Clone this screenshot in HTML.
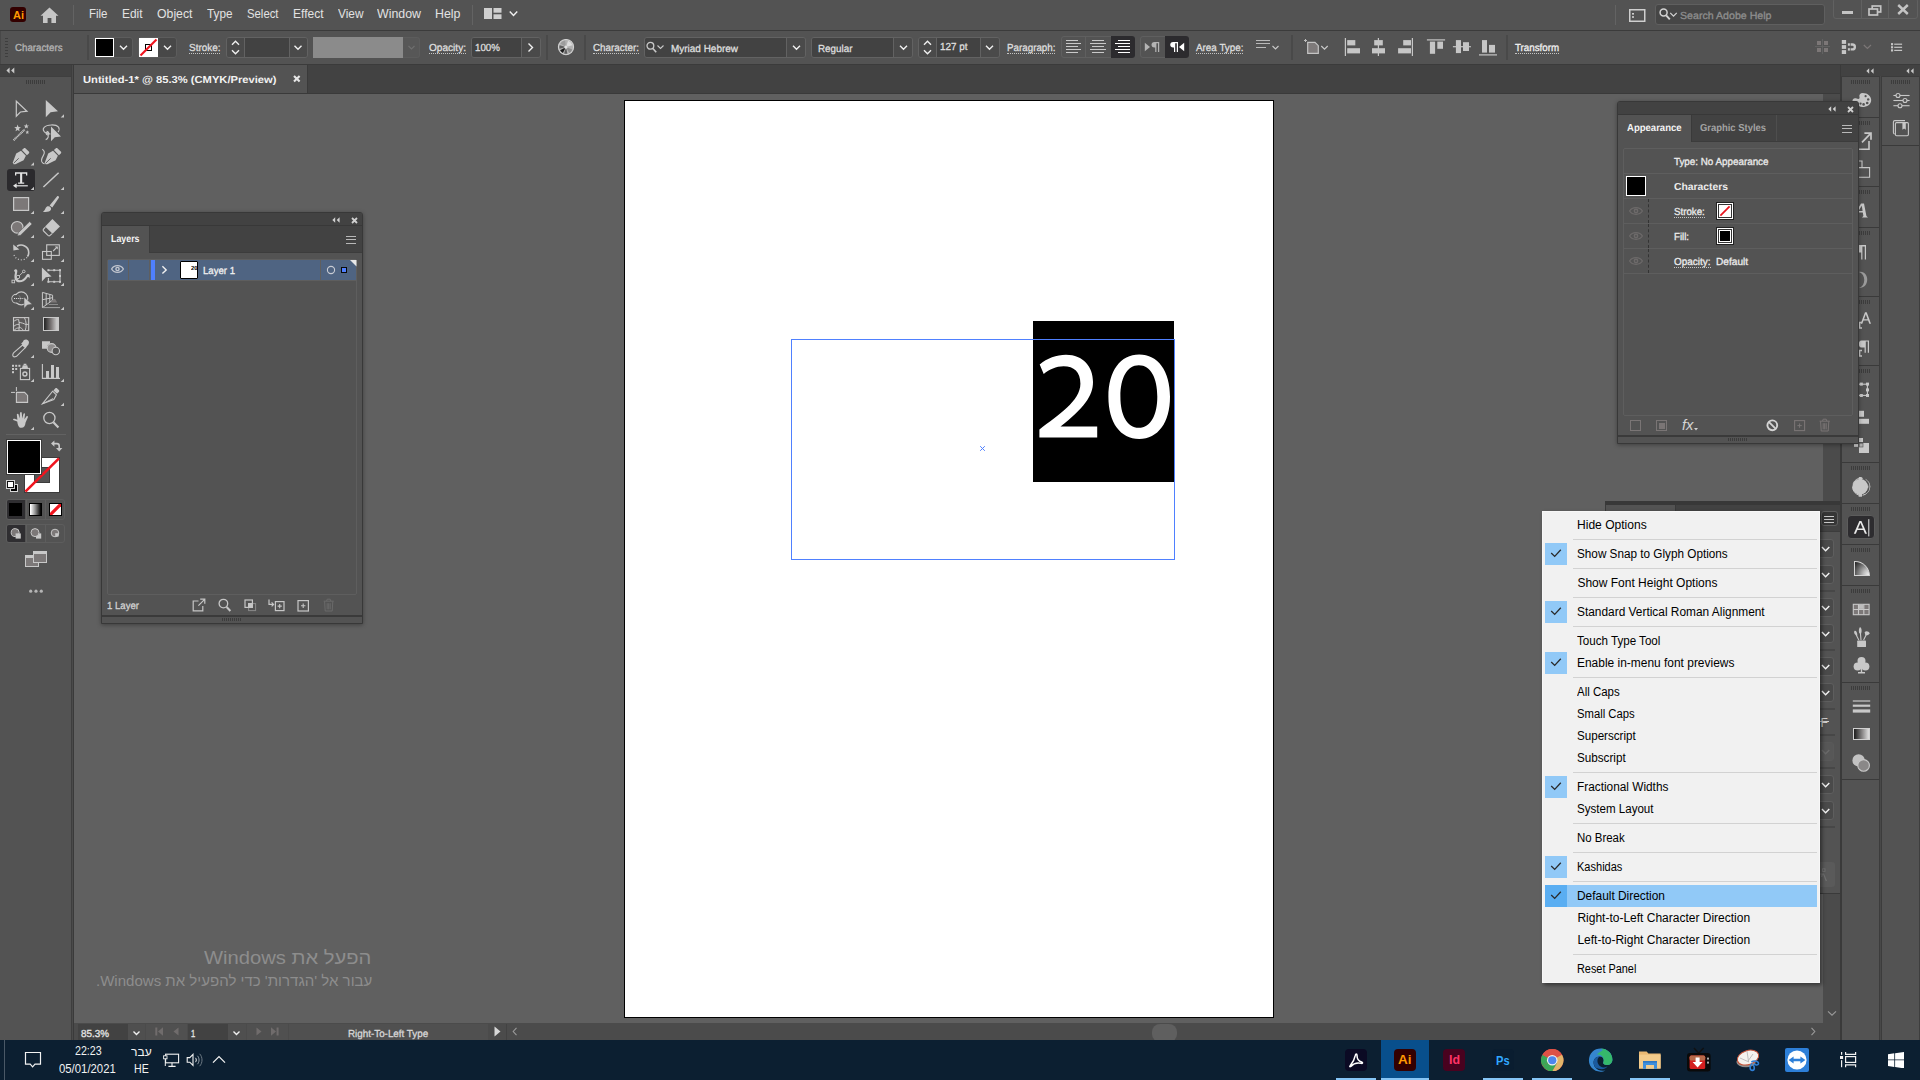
<!DOCTYPE html>
<html><head><meta charset="utf-8"><title>Adobe Illustrator</title>
<style>
html,body{margin:0;padding:0;}
body{width:1920px;height:1080px;overflow:hidden;position:relative;background:#606060;
font-family:"Liberation Sans",sans-serif;font-size:11px;color:#d6d6d6;}
div,svg,span.t{position:absolute;}
div{box-sizing:border-box;}
span.t{white-space:nowrap;transform-origin:0 50%;}
.du{border-bottom:1px dotted #c8c8c8;}
</style></head>
<body>
<div style="left:73px;top:65px;width:1768px;height:29px;background:#424242;"></div><div style="left:74px;top:65px;width:234px;height:29px;background:#535353;border-right:1px solid #3a3a3a;"></div><div style="left:73px;top:93px;width:1768px;height:1px;background:#3a3a3a;"></div><span class="t" style="left:83.3px;top:76px;font-size:10.2px;line-height:10.2px;color:#f2f2f2;text-rendering:geometricPrecision;font-weight:700;transform:scaleX(1.0971);">Untitled-1* @ 85.3% (CMYK/Preview)</span><svg style="left:293px;top:75px;" width="8" height="8" viewBox="0 0 8 8"><path d="M1 1 L6.6 6.6 M6.6 1 L1 6.6" stroke="#e6e6e6" stroke-width="2.1"/></svg><div style="left:73px;top:94px;width:1768px;height:929px;background:#606060;"></div><div style="left:624px;top:100px;width:650px;height:918px;background:#ffffff;border:1px solid #000;"></div><div style="left:1033px;top:321px;width:141px;height:161px;background:#000;"></div><svg style="left:1033px;top:321px" width="141" height="161" viewBox="1033 321 141 161"><path d="M1039.7 364.4 C1047 358.5 1056.5 354.8 1066 354.8 C1083.5 354.8 1093 367 1093 382 C1093 396 1084 408 1060.5 426.6 L1097.2 426.6 L1097.2 437.6 L1039.4 437.6 L1039.4 429.4 C1058 415.5 1080.4 401 1080.4 383.8 C1080.4 372 1074 366.3 1063.6 366.3 C1056 366.3 1049.5 369.5 1043.7 373.9 Z" fill="#fff"/><path d="M1139.2 354.6 C1158 354.6 1170 371 1170 396.8 C1170 422.6 1158 439 1139.2 439 C1120.4 439 1108.4 422.6 1108.4 396.8 C1108.4 371 1120.4 354.6 1139.2 354.6 Z M1138.85 365.3 C1127 365.3 1120.4 378 1120.4 396.5 C1120.4 415 1127 427.8 1138.85 427.8 C1150.7 427.8 1157.3 415 1157.3 396.5 C1157.3 378 1150.7 365.3 1138.85 365.3 Z" fill="#fff" fill-rule="evenodd"/></svg><div style="left:791px;top:339px;width:384px;height:221px;border:1px solid #4f80ff;"></div><svg style="left:979px;top:445px;" width="7" height="7" viewBox="0 0 7 7"><path d="M1.2 1.2 L5.8 5.8 M5.8 1.2 L1.2 5.8" stroke="#4f80ff" stroke-width="1"/></svg><span class="t" style="left:204.3px;top:949px;font-size:18.5px;line-height:18.5px;color:#8d8d8d;direction:rtl;transform:scaleX(1.0918);">הפעל את Windows</span><span class="t" style="left:96px;top:974px;font-size:14.5px;line-height:14.5px;color:#8d8d8d;direction:rtl;transform:scaleX(1.0370);">עבור אל 'הגדרות' כדי להפעיל את Windows.</span><div style="left:73px;top:1023px;width:1768px;height:17px;background:#4b4b4b;"></div><div style="left:78px;top:1024px;width:50px;height:16px;background:#424242;"></div><span class="t" style="left:80.7px;top:1030px;font-size:10.2px;line-height:10.2px;color:#e6e6e6;text-rendering:geometricPrecision;-webkit-text-stroke:.3px;transform:scaleX(0.9692);">85.3%</span><div style="left:128px;top:1024px;width:17px;height:16px;background:#4f4f4f;"></div><svg style="left:0;top:0;overflow:visible" width="1" height="1"><path d="M133.5 1031.5 L136.5 1034.5 L139.5 1031.5" fill="none" stroke="#f0f0f0" stroke-width="1.4"/></svg><div style="left:146px;top:1024px;width:41px;height:16px;background:#505050;"></div><svg style="left:155px;top:1027px;" width="9" height="9" viewBox="0 0 9 9"><rect x="0.3" y="0.5" width="2" height="8" fill="#706c6c"/><path d="M8 0.3 L3 4.5 L8 8.7 Z" fill="#706c6c"/></svg><svg style="left:172px;top:1027px;" width="8" height="9" viewBox="0 0 8 9"><path d="M6.5 0.5 L1.5 4.5 L6.5 8.5 Z" fill="#706c6c"/></svg><div style="left:188px;top:1024px;width:40px;height:16px;background:#424242;"></div><span class="t" style="left:190.8px;top:1030px;font-size:10.2px;line-height:10.2px;color:#e6e6e6;text-rendering:geometricPrecision;-webkit-text-stroke:.3px;transform:scaleX(0.7405);">1</span><div style="left:228px;top:1024px;width:18px;height:16px;background:#4f4f4f;"></div><svg style="left:0;top:0;overflow:visible" width="1" height="1"><path d="M233.5 1031.5 L236.5 1034.5 L239.5 1031.5" fill="none" stroke="#f0f0f0" stroke-width="1.4"/></svg><div style="left:247px;top:1024px;width:41px;height:16px;background:#505050;"></div><svg style="left:255px;top:1027px;" width="8" height="9" viewBox="0 0 8 9"><path d="M1.5 0.5 L6.5 4.5 L1.5 8.5 Z" fill="#706c6c"/></svg><svg style="left:270px;top:1027px;" width="9" height="9" viewBox="0 0 9 9"><path d="M1 0.3 L6 4.5 L1 8.7 Z" fill="#706c6c"/><rect x="6.6" y="0.5" width="2" height="8" fill="#706c6c"/></svg><div style="left:289px;top:1024px;width:199px;height:16px;background:#505050;"></div><span class="t" style="left:347.8px;top:1030px;font-size:10.2px;line-height:10.2px;color:#d8d8d8;text-rendering:geometricPrecision;-webkit-text-stroke:.3px;transform:scaleX(0.9655);">Right-To-Left Type</span><svg style="left:494px;top:1026px;" width="8" height="11" viewBox="0 0 8 11"><path d="M0.5 0.5 L6.5 5.5 L0.5 10.5 Z" fill="#d8d8d8"/></svg><div style="left:506px;top:1024px;width:1px;height:16px;background:#424242;"></div><svg style="left:512px;top:1027px;" width="6" height="9" viewBox="0 0 6 9"><path d="M4.5 0.8 L1.2 4.5 L4.5 8.2" fill="none" stroke="#9a9a9a" stroke-width="1.1"/></svg><div style="left:1152px;top:1024px;width:25px;height:18px;background:#5f5f5f;border-radius:8px;"></div><svg style="left:1810px;top:1027px;" width="6" height="9" viewBox="0 0 6 9"><path d="M1.5 0.8 L4.8 4.5 L1.5 8.2" fill="none" stroke="#9a9a9a" stroke-width="1.1"/></svg><div style="left:1823px;top:94px;width:17px;height:946px;background:#4b4b4b;"></div><svg style="left:1827px;top:1010px;" width="10" height="7" viewBox="0 0 10 7"><path d="M1 1.3 L5 5.2 L9 1.3" fill="none" stroke="#9a9a9a" stroke-width="1.1"/></svg><div style="left:0px;top:65px;width:73px;height:975px;background:#535353;"></div><div style="left:71px;top:65px;width:1px;height:975px;background:#3e3e3e;"></div><div style="left:72px;top:65px;width:1px;height:975px;background:#4a4a4a;"></div><div style="left:73px;top:65px;width:1px;height:975px;background:#3a3a3a;"></div><div style="left:0px;top:65px;width:71px;height:11px;background:#424242;"></div><div style="left:0px;top:76px;width:71px;height:1px;background:#3f3f3f;"></div><svg style="left:6px;top:67px;" width="9" height="7" viewBox="0 0 9 7"><path d="M3.6 0.4 L0.4 3.5 L3.6 6.6 Z M8.3 0.4 L5.1 3.5 L8.3 6.6 Z" fill="#c8c8c8"/></svg><div style="left:26px;top:80px;width:1px;height:4px;background:#3c3c3c;"></div><div style="left:28px;top:80px;width:1px;height:4px;background:#3c3c3c;"></div><div style="left:30px;top:80px;width:1px;height:4px;background:#3c3c3c;"></div><div style="left:32px;top:80px;width:1px;height:4px;background:#3c3c3c;"></div><div style="left:34px;top:80px;width:1px;height:4px;background:#3c3c3c;"></div><div style="left:36px;top:80px;width:1px;height:4px;background:#3c3c3c;"></div><div style="left:38px;top:80px;width:1px;height:4px;background:#3c3c3c;"></div><div style="left:40px;top:80px;width:1px;height:4px;background:#3c3c3c;"></div><div style="left:42px;top:80px;width:1px;height:4px;background:#3c3c3c;"></div><div style="left:44px;top:80px;width:1px;height:4px;background:#3c3c3c;"></div><div style="left:7px;top:169px;width:28px;height:22px;background:#2b2a2d;border-radius:3px;"></div><div style="left:43px;top:317px;width:16px;height:14px;border:1.1px solid #c8c8c8;background:linear-gradient(90deg,#2a2a2a 5%,#7a7676 50%,#c8c8c8 90%);"></div><svg style="left:0;top:0" width="74" height="600" viewBox="0 0 74 600"><path d="M16.3 101.2 L16.3 116.2 L20.4 112 L27 111.2 Z" fill="none" stroke="#c8c8c8" stroke-width="1.2" stroke-linejoin="miter"/><path d="M45.8 100 L45.8 117.2 L50.6 112.2 L58 111.3 Z" fill="#c8c8c8"/><path d="M64 114.3 L64 117.6 L60.7 117.6 Z" fill="#c8c8c8"/><path d="M13.6 140.2 L24.6 129.6" stroke="#c8c8c8" stroke-width="2" stroke-dasharray="1.1 0.5"/><path d="M17.6 124.6 L18.5 127 L21 127.3 L19 128.8 L19.6 131.3 L17.6 129.9 L15.5 131.3 L16.2 128.8 L14.2 127.3 L16.7 127 Z" fill="#c8c8c8"/><path d="M26.3 123.6 L27 125.4 L28.9 125.6 L27.4 126.8 L27.9 128.6 L26.3 127.6 L24.7 128.6 L25.2 126.8 L23.7 125.6 L25.6 125.4 Z" fill="#c8c8c8"/><path d="M27.3 130.2 L27.8 131.5 L29.2 131.7 L28.1 132.6 L28.5 134 L27.3 133.2 L26.1 134 L26.5 132.6 L25.4 131.7 L26.8 131.5 Z" fill="#c8c8c8"/><path d="M50.5 134 C44 134 42 129.5 44.2 127.3 C47 124.3 56 124 58.5 127.2 C59.6 128.7 59 131 58 132" fill="none" stroke="#c8c8c8" stroke-width="1.1"/><path d="M47.5 131.6 C45.5 132.6 46 135.2 48 134.8 C49.6 134.4 48.8 132 47.5 131.6 C49.5 136 48 139 45.7 139.6" fill="none" stroke="#c8c8c8" stroke-width="1.1"/><path d="M51 126.6 L51 141.2 L54.8 137.2 L61 136.4 Z" fill="#c8c8c8"/><g transform="translate(0 0)"><path d="M12.8 162.4 L16.2 153.4 L21 150.8 L25.9 155.7 L23.6 160.2 L15.4 164.3 L13.6 164.3 Z" fill="#c8c8c8"/><path d="M21.9 150 L23.6 148.4 C24.2 147.8 25 147.8 25.6 148.4 L28.8 151.6 C29.4 152.2 29.4 153 28.8 153.6 L26.9 155.2 Z" fill="#c8c8c8"/><path d="M13.9 163 L18.7 158.3" stroke="#535353" stroke-width="0.9"/></g><path d="M34 162.29999999999998 L34 165.6 L30.7 165.6 Z" fill="#c8c8c8"/><g transform="translate(32 0)"><path d="M12.8 162.4 L16.2 153.4 L21 150.8 L25.9 155.7 L23.6 160.2 L15.4 164.3 L13.6 164.3 Z" fill="#c8c8c8"/><path d="M21.9 150 L23.6 148.4 C24.2 147.8 25 147.8 25.6 148.4 L28.8 151.6 C29.4 152.2 29.4 153 28.8 153.6 L26.9 155.2 Z" fill="#c8c8c8"/><path d="M13.9 163 L18.7 158.3" stroke="#535353" stroke-width="0.9"/></g><path d="M42.3 149.2 C45 151 44.8 153 43.4 155.4 C41.6 158.4 41 161.6 42.6 162.8 C43.2 163.3 44 163.6 44.7 163.7" fill="none" stroke="#c8c8c8" stroke-width="1.1"/><path d="M15 172.3 L27.3 172.3 L27.3 175.6 L26 175.6 L26 173.8 L22.2 173.8 L22.2 182.4 L24.2 182.4 L24.2 183.8 L18.1 183.8 L18.1 182.4 L20.1 182.4 L20.1 173.8 L16.3 173.8 L16.3 175.6 L15 175.6 Z" fill="#e4e4e4"/><path d="M16 185.8 L27.8 185.8" stroke="#e4e4e4" stroke-width="1.2"/><path d="M16.6 183.3 L13 185.8 L16.6 188.3 Z" fill="#e4e4e4"/><path d="M34 186.7 L34 190 L30.7 190 Z" fill="#c8c8c8"/><path d="M43.4 187 L58.6 172.8" stroke="#c8c8c8" stroke-width="1.5"/><path d="M64 186.7 L64 190 L60.7 190 Z" fill="#c8c8c8"/><rect x="13.6" y="197.6" width="15" height="12.8" fill="#7c7878" stroke="#c8c8c8" stroke-width="1.2"/><path d="M34 210.7 L34 214 L30.7 214 Z" fill="#c8c8c8"/><path d="M49.6 205.5 L57 196.4 C57.8 195.4 59.6 196.6 58.9 197.8 L52.3 207.6 Z" fill="#c8c8c8"/><path d="M42.9 211.8 C45 211 45 208 47 206.5 C49 205.3 51.8 207.4 51 209.6 C50 212 46 212.4 42.9 211.8 Z" fill="#c8c8c8"/><path d="M64 210.7 L64 214 L60.7 214 Z" fill="#c8c8c8"/><circle cx="17.2" cy="227.3" r="5.8" fill="#7c7878" stroke="#c8c8c8" stroke-width="1.2"/><path d="M29.7 221.6 L32.1 224 L20.6 235.2 L17.4 236 L18.2 232.8 Z" fill="#c8c8c8" stroke="#535353" stroke-width="0.6"/><path d="M34 234.7 L34 238 L30.7 238 Z" fill="#c8c8c8"/><path d="M52.4 219.1 L60 226.5 L52.6 233.7 L45.1 226.5 Z" fill="#c8c8c8"/><path d="M45.4 227.2 L43.6 229 C43 229.6 43 230.4 43.6 231 L48 235.4 C48.7 236 49.5 236 50.1 235.4 L52 233.6" fill="none" stroke="#c8c8c8" stroke-width="1.1"/><path d="M64 234.7 L64 238 L60.7 238 Z" fill="#c8c8c8"/><path d="M17 246.2 C22 243.2 28.5 246.5 28.7 252.2 C28.8 254 28.2 255.6 27.4 256.6" fill="none" stroke="#c8c8c8" stroke-width="1.6"/><path d="M13.2 244.6 L13.4 250.6 L19.4 249.6 Z" fill="#c8c8c8"/><path d="M14 255 C15.5 259 20 260.6 24 259.4 C25.6 258.8 26.8 257.8 27.6 256.6" fill="none" stroke="#c8c8c8" stroke-width="1.2" stroke-dasharray="1 1.9"/><path d="M34 258.7 L34 262 L30.7 262 Z" fill="#c8c8c8"/><rect x="46.7" y="244.8" width="12.6" height="10.6" fill="none" stroke="#c8c8c8" stroke-width="1.1"/><rect x="42.5" y="251.5" width="8.8" height="7.8" fill="none" stroke="#c8c8c8" stroke-width="1.1"/><path d="M53.2 251 L57 247.2" stroke="#c8c8c8" stroke-width="1.1"/><path d="M54.8 246.6 L57.8 246.6 L57.8 249.6 Z" fill="#c8c8c8"/><path d="M64 258.7 L64 262 L60.7 262 Z" fill="#c8c8c8"/><path d="M14 270.6 C15.5 268.2 18 269.6 17.2 272.2 C16.6 274.6 16.2 277.6 18.2 279.8 C21 281.4 24.6 278.4 26.2 275.4 C27.6 273 30 273.6 29.8 276.2 L29.4 278.4 C28.4 276.4 27.6 276.8 26.6 278.6 C24.6 281.8 19.6 283.4 16.4 281.4 C13.4 279 14.6 275 15 272.6 Z" fill="#c8c8c8"/><path d="M13.2 281.6 L23.6 271.6" stroke="#c8c8c8" stroke-width="0.9"/><circle cx="18" cy="277" r="1.7" fill="#535353" stroke="#c8c8c8" stroke-width="0.9"/><rect x="12" y="280.2" width="2.6" height="2.6" fill="#535353" stroke="#c8c8c8" stroke-width="0.9"/><circle cx="23.8" cy="271.4" r="1.3" fill="#535353" stroke="#c8c8c8" stroke-width="0.9"/><path d="M34 282.7 L34 286 L30.7 286 Z" fill="#c8c8c8"/><path d="M41.9 267.6 L41.9 281.4 L45.8 277.3 L51.6 276.6 Z" fill="#c8c8c8"/><path d="M48.4 270.2 L60 270.2 L60 281.8 L48.4 281.8 L48.4 278" fill="none" stroke="#c8c8c8" stroke-width="1.1"/><rect x="47.4" y="269.2" width="2" height="2" fill="#c8c8c8"/><rect x="53.2" y="269.2" width="2" height="2" fill="#c8c8c8"/><rect x="59" y="269.2" width="2" height="2" fill="#c8c8c8"/><rect x="59" y="275" width="2" height="2" fill="#c8c8c8"/><rect x="59" y="280.8" width="2" height="2" fill="#c8c8c8"/><rect x="53.2" y="280.8" width="2" height="2" fill="#c8c8c8"/><rect x="47.4" y="280.8" width="2" height="2" fill="#c8c8c8"/><path d="M64 282.7 L64 286 L60.7 286 Z" fill="#c8c8c8"/><circle cx="16.2" cy="298.7" r="4.3" fill="#535353" stroke="#c8c8c8" stroke-width="1.1"/><circle cx="21.3" cy="298.4" r="6.5" fill="#535353" stroke="#c8c8c8" stroke-width="1.1"/><circle cx="16.2" cy="298.7" r="3.7" fill="#535353"/><path d="M18.9 295.4 A4.3 4.3 0 0 1 18.9 302" fill="none" stroke="#8a8a8a" stroke-width="0.8"/><path d="M14 298.5 L23.4 298.5" stroke="#e0e0e0" stroke-width="1.2" stroke-dasharray="1.1 1.0"/><path d="M24 297 L24 308.4 L27.4 304.9 L32.2 304.3 Z" fill="#c8c8c8" stroke="#535353" stroke-width="0.5"/><path d="M34 306.7 L34 310 L30.7 310 Z" fill="#c8c8c8"/><path d="M42.4 292.4 L42.4 307.6 L52.6 300.2 L52.6 295.2 Z M42.4 299.7 L52.6 297.7 M46.2 293.5 L46.2 304.8 M49.8 294.5 L49.8 302.2" fill="none" stroke="#c8c8c8" stroke-width="1"/><path d="M53.4 299 L55.2 299 L57.2 302.4 L50.6 302.4 Z" fill="#7c7878"/><path d="M48.8 304.5 L58 304.5" stroke="#8c8c8c" stroke-width="1"/><path d="M43 307.6 L60 307.6" stroke="#a4a4a4" stroke-width="1"/><path d="M64 306.7 L64 310 L60.7 310 Z" fill="#c8c8c8"/><rect x="13.5" y="317.6" width="15.2" height="13" fill="#5c5a5a" stroke="#c8c8c8" stroke-width="1.1"/><path d="M24.4 317.6 C26.6 321.5 26.6 326.5 25.2 330.6 M26 324.4 L28.7 324.4 M18.6 319.5 C19.4 323 19.4 327 18.9 330.6 M13.5 321.8 C15 320 17.2 319.4 18.6 319.6 M13.6 326.6 C15.4 324.6 17.6 324.2 19 324.4 M19 322.4 C21.4 322.6 24 323.6 26 324.6 M14 330.4 C15.6 328.4 17.4 327.8 19 328 M19 327 C20.8 327.6 22.6 329 23.6 330.6" fill="none" stroke="#c8c8c8" stroke-width="1"/><path d="M22.6 345 L25.3 347.6 L17 355.8 C16 356.8 14 357.2 13.2 356.4 C12.4 355.6 12.8 353.6 13.8 352.6 Z" fill="none" stroke="#c8c8c8" stroke-width="1.1"/><path d="M21.2 343.4 L23 341.8 C23.4 340.2 25.2 339.2 27 339.8 C28.8 340.4 29.6 342.4 28.6 344 C28.2 345.4 27 346 26.8 346.4 L25.6 348.6 Z" fill="#c8c8c8"/><path d="M34 354.7 L34 358 L30.7 358 Z" fill="#c8c8c8"/><path d="M42 341.2 L50 341.2 L50 343.4 C47.6 344 46.6 346.4 47 348.8 L42 348.8 Z" fill="#c8c8c8"/><circle cx="51.6" cy="348" r="4.4" fill="#8e8c8c" stroke="#c8c8c8" stroke-width="1.1"/><circle cx="55.8" cy="351" r="3.7" fill="#535353" stroke="#c8c8c8" stroke-width="1.1"/><rect x="12" y="364.8" width="2" height="2" fill="#c8c8c8"/><rect x="15.2" y="364.8" width="2" height="2" fill="#c8c8c8"/><rect x="18.4" y="364.8" width="2" height="2" fill="#c8c8c8"/><rect x="12" y="368" width="2" height="2" fill="#c8c8c8"/><rect x="15.2" y="368" width="2" height="2" fill="#c8c8c8"/><rect x="12" y="371.2" width="2" height="2" fill="#c8c8c8"/><rect x="20.4" y="368.4" width="9.2" height="11.2" fill="none" stroke="#c8c8c8" stroke-width="1.1"/><path d="M22 368 L22.8 365.2 L27.2 365.2 L28 368 Z M23.6 365 L23.6 363.8 L26.4 363.8 L26.4 365 Z" fill="#c8c8c8"/><circle cx="24.9" cy="374" r="2" fill="none" stroke="#c8c8c8" stroke-width="1.4"/><path d="M34 378.7 L34 382 L30.7 382 Z" fill="#c8c8c8"/><path d="M42.4 364 L42.4 378.4 L60 378.4" fill="none" stroke="#c8c8c8" stroke-width="1.1"/><rect x="46" y="371" width="3" height="7" fill="#c8c8c8"/><rect x="51" y="365" width="3" height="13" fill="#c8c8c8"/><rect x="56" y="367" width="3" height="11" fill="#c8c8c8"/><path d="M64 378.7 L64 382 L60.7 382 Z" fill="#c8c8c8"/><path d="M11 392.4 L15 392.4 M16.4 387 L16.4 391" stroke="#c8c8c8" stroke-width="1"/><path d="M16.4 392.4 L24.6 392.4 L27.6 395.4 L27.6 402.4 L16.4 402.4 Z" fill="#7c7878" stroke="#c8c8c8" stroke-width="1.1"/><path d="M53.4 390.4 L55.2 388.4 C55.8 387.8 56.6 387.8 57.2 388.4 L58.8 390 C59.4 390.6 59.4 391.4 58.8 392 L57 393.8 Z" fill="#c8c8c8"/><path d="M52.6 391.2 L56.4 394.8 L53.8 399.6 L42.4 403.8 Z" fill="none" stroke="#c8c8c8" stroke-width="1.1"/><path d="M42.4 403.8 L53 398.6" stroke="#c8c8c8" stroke-width="1"/><path d="M64 402.7 L64 406 L60.7 406 Z" fill="#c8c8c8"/><path d="M17.2 421.4 L13.2 420 C12.8 419.2 13.6 418.6 14.6 418.8 L17.4 419.8 L16.8 414.6 C16.8 413.4 18.4 413.4 18.6 414.6 L19.6 418.6 L20 413 C20.2 411.8 21.8 411.8 21.8 413 L22.2 418.6 L23.4 414 C23.8 412.8 25.2 413.2 25 414.4 L24.4 419.2 L26.4 416.4 C27 415.4 28.4 416.2 27.8 417.4 L25.6 422.4 C25.2 425.6 24 427.8 21.4 427.8 C18.6 427.8 17.8 425 17.2 421.4 Z" fill="#c8c8c8"/><path d="M34 426.7 L34 430 L30.7 430 Z" fill="#c8c8c8"/><circle cx="49.4" cy="418" r="5.6" fill="none" stroke="#c8c8c8" stroke-width="1.3"/><path d="M53.4 422.2 L58.4 427.4" stroke="#c8c8c8" stroke-width="2.2"/><path d="M6 434.5 L66 434.5" stroke="#626262" stroke-width="1"/><path d="M54 443.6 L57 443.6 C58.6 443.6 59.2 444.4 59.2 446 L59.2 448.6" fill="none" stroke="#c8c8c8" stroke-width="1.6"/><path d="M54.4 440.4 L51 443.6 L54.4 446.8 Z M56 448 L62.4 448 L59.2 451.4 Z" fill="#c8c8c8"/><circle cx="30.7" cy="591.2" r="1.6" fill="#b4b4b4"/><circle cx="36" cy="591.2" r="1.6" fill="#b4b4b4"/><circle cx="41.3" cy="591.2" r="1.6" fill="#b4b4b4"/></svg><svg style="left:24px;top:457px" width="37" height="37" viewBox="24 457 37 37"><rect x="24.5" y="457.5" width="35" height="35" fill="#fff" stroke="#3c3c3c" stroke-width="1"/><rect x="34.5" y="467.5" width="15" height="15" fill="#535353" stroke="#3c3c3c" stroke-width="1"/><path d="M25.4 491.6 L59 458.4" stroke="#f0141e" stroke-width="2.6"/></svg><div style="left:6px;top:439px;width:36px;height:36px;background:#000;border:1px solid #3c3c3c;box-shadow:inset 0 0 0 1px #fff;"></div><div style="left:10px;top:484px;width:8px;height:8px;background:#000;border:1px solid #d8d8d8;"></div><div style="left:6px;top:480px;width:9px;height:9px;background:#111;border:1px solid #d4d4d4;"></div><div style="left:8px;top:482px;width:5px;height:5px;background:#fff;"></div><div style="left:6px;top:499px;width:59px;height:21px;border:1px solid #5d5d5d;border-radius:3px;"></div><div style="left:7px;top:500px;width:18px;height:19px;background:#2f2e31;border-radius:2px 0 0 2px;"></div><div style="left:25.5px;top:500px;width:1px;height:19px;background:#5d5d5d;"></div><div style="left:45px;top:500px;width:1px;height:19px;background:#5d5d5d;"></div><div style="left:9px;top:503px;width:13px;height:13px;background:#000;"></div><div style="left:29px;top:503px;width:13px;height:13px;border:1px solid #000;background:linear-gradient(90deg,#fff 5%,#8a8a8a 50%,#0a0a0a 95%);"></div><div style="left:49px;top:503px;width:13px;height:13px;background:#fff;border:1px solid #000;"></div><svg style="left:50px;top:504px;" width="11" height="11" viewBox="0 0 11 11"><path d="M0 11 L11 0" stroke="#f0141e" stroke-width="3.2"/></svg><div style="left:6px;top:524px;width:59px;height:19px;border:1px solid #5d5d5d;border-radius:3px;"></div><div style="left:7px;top:525px;width:18px;height:17px;background:#2f2e31;border-radius:2px 0 0 2px;"></div><div style="left:25.5px;top:525px;width:1px;height:17px;background:#5d5d5d;"></div><div style="left:45px;top:525px;width:1px;height:17px;background:#5d5d5d;"></div><svg style="left:0;top:520px" width="74" height="26" viewBox="0 520 74 26"><circle cx="15.2" cy="532.6" r="4" fill="#7c7878" stroke="#c8c8c8" stroke-width="1"/><rect x="15.6" y="533.4" width="5.2" height="5.2" fill="#c8c8c8"/><rect x="36" y="533.4" width="5.2" height="5.2" fill="#c8c8c8"/><circle cx="35" cy="532.6" r="4" fill="#7c7878" stroke="#c8c8c8" stroke-width="1"/><circle cx="55" cy="533" r="3.8" fill="#7c7878" stroke="#c8c8c8" stroke-width="1"/><rect x="55.2" y="533.2" width="3.4" height="3.4" fill="#c8c8c8"/></svg><div style="left:25px;top:555px;width:14px;height:12px;background:#7c7878;border:1px solid #c8c8c8;border-top:3px solid #c8c8c8;"></div><div style="left:33px;top:551px;width:14px;height:12px;background:#7c7878;border:1px solid #c8c8c8;border-top:3px solid #c8c8c8;"></div><div style="left:101px;top:212px;width:262px;height:412px;background:#535353;border:1px solid #383838;border-radius:3px 3px 0 0;box-shadow:0 1px 4px rgba(0,0,0,.35);"></div><div style="left:102px;top:213px;width:260px;height:13px;background:#424242;border-radius:2px 2px 0 0;"></div><div style="left:102px;top:225px;width:260px;height:1px;background:#383838;"></div><div style="left:102px;top:226px;width:260px;height:27px;background:#424242;"></div><div style="left:102px;top:252px;width:260px;height:1px;background:#3c3c3c;"></div><div style="left:102px;top:226px;width:47px;height:27px;background:#535353;"></div><div style="left:149px;top:226px;width:1px;height:27px;background:#3c3c3c;"></div><span class="t" style="left:111px;top:235px;font-size:10.2px;line-height:10.2px;color:#f4f4f4;text-rendering:geometricPrecision;font-weight:700;transform:scaleX(0.8673);">Layers</span><svg style="left:332px;top:217px;" width="8" height="6" viewBox="0 0 8 6"><path d="M3.2 0.2 L0.3 3 L3.2 5.8 Z M7.6 0.2 L4.7 3 L7.6 5.8 Z" fill="#d0d0d0"/></svg><svg style="left:351px;top:217px;" width="7" height="7" viewBox="0 0 7 7"><path d="M1 1 L6 6 M6 1 L1 6" stroke="#d0d0d0" stroke-width="1.8"/></svg><div style="left:346px;top:236.0px;width:10px;height:1px;background:#b8b8b8;"></div><div style="left:346px;top:239.4px;width:10px;height:1px;background:#b8b8b8;"></div><div style="left:346px;top:242.8px;width:10px;height:1px;background:#b8b8b8;"></div><div style="left:107px;top:259px;width:250px;height:336px;border:1px solid #5e5e5e;border-radius:2px;"></div><div style="left:108px;top:260px;width:248px;height:20px;background:#4f6482;"></div><div style="left:108px;top:280px;width:248px;height:1px;background:#5e5e5e;"></div><div style="left:128px;top:260px;width:1px;height:20px;background:#5f5f5f;"></div><div style="left:149px;top:260px;width:1px;height:20px;background:#5f5f5f;"></div><div style="left:320px;top:260px;width:1px;height:20px;background:#5f5f5f;"></div><div style="left:151px;top:260px;width:3.5px;height:19.5px;background:#4f80ff;"></div><svg style="left:111px;top:264px;" width="13" height="10" viewBox="0 0 13 10"><path d="M0.6 5 C3 0.6 10 0.6 12.4 5 C10 9.4 3 9.4 0.6 5 Z" fill="none" stroke="#c2c6cf" stroke-width="1.3"/><circle cx="6.5" cy="5" r="2.3" fill="#c2c6cf"/><circle cx="6.5" cy="5" r="0.9" fill="#4f6482"/></svg><svg style="left:161px;top:265px;" width="7" height="10" viewBox="0 0 7 10"><path d="M1.4 1.2 L5.2 4.9 L1.4 8.6" fill="none" stroke="#f0f0f0" stroke-width="1.4"/></svg><div style="left:180px;top:261px;width:18px;height:18px;background:#fff;border:1px solid #000;border-radius:1px;"></div><span class="t" style="left:190.6px;top:266px;font-size:5px;line-height:5px;color:#000;font-weight:700;transform:scaleX(1.1685);">20</span><span class="t" style="left:203px;top:267px;font-size:10.2px;line-height:10.2px;color:#f0f0f0;text-rendering:geometricPrecision;-webkit-text-stroke:.3px;transform:scaleX(0.9416);">Layer 1</span><svg style="left:326px;top:265px;" width="10" height="10" viewBox="0 0 10 10"><circle cx="5" cy="5" r="3.6" fill="none" stroke="#c9ccd4" stroke-width="1.1"/></svg><div style="left:341px;top:267px;width:6px;height:6px;background:#4f80ff;border:1px solid #0a0a0a;"></div><svg style="left:350px;top:260px;" width="7" height="7" viewBox="0 0 7 7"><path d="M0 0 L6.5 0 L6.5 6.5 Z" fill="#e8e8e8"/></svg><span class="t" style="left:107.4px;top:602px;font-size:10.2px;line-height:10.2px;color:#d2d2d2;text-rendering:geometricPrecision;-webkit-text-stroke:.3px;transform:scaleX(0.9416);">1 Layer</span><svg style="left:192px;top:598px;" width="14" height="14" viewBox="0 0 14 14"><path d="M6.5 3 L1.2 3 L1.2 12.8 L10.8 12.8 L10.8 8" fill="none" stroke="#c6c6c6" stroke-width="1.2"/><path d="M6.4 7.6 L12.4 1.6 M8.2 1.2 L12.8 1.2 L12.8 5.8" fill="none" stroke="#c6c6c6" stroke-width="1.2"/></svg><svg style="left:218px;top:598px;" width="14" height="14" viewBox="0 0 14 14"><circle cx="5.4" cy="5.6" r="4.3" fill="none" stroke="#c6c6c6" stroke-width="1.3"/><path d="M8.6 9 L12.4 13" stroke="#c6c6c6" stroke-width="2"/></svg><svg style="left:244px;top:599px;" width="13" height="13" viewBox="0 0 13 13"><rect x="4.6" y="4.6" width="7" height="7" fill="none" stroke="#8a8a8a" stroke-width="1"/><rect x="1" y="1" width="7.4" height="7.4" fill="none" stroke="#c6c6c6" stroke-width="1.2"/><rect x="4" y="4" width="4.6" height="4.6" fill="#c6c6c6"/></svg><svg style="left:268px;top:599px;" width="17" height="13" viewBox="0 0 17 13"><path d="M1 0.6 L1 5.4 L5.4 5.4 M3.6 3.4 L5.6 5.4 L3.6 7.4" fill="none" stroke="#c6c6c6" stroke-width="1.2"/><rect x="7.4" y="2.6" width="8.6" height="9" fill="none" stroke="#c6c6c6" stroke-width="1.2"/><path d="M9.6 7.1 L13.8 7.1 M11.7 5 L11.7 9.2" stroke="#c6c6c6" stroke-width="1.1"/></svg><svg style="left:297px;top:599px;" width="13" height="13" viewBox="0 0 13 13"><rect x="1" y="1.6" width="10.4" height="10.4" fill="none" stroke="#c6c6c6" stroke-width="1.2"/><path d="M4 6.8 L8.4 6.8 M6.2 4.6 L6.2 9" stroke="#c6c6c6" stroke-width="1.1"/></svg><svg style="left:323px;top:598px;" width="12" height="14" viewBox="0 0 12 14"><path d="M0.6 3.2 L10.8 3.2 M3.6 3 L4.2 1.2 L7.2 1.2 L7.8 3 M1.6 3.4 L2.2 13 L9.2 13 L9.8 3.4 M4.2 5.2 L4.2 11.4 M5.7 5.2 L5.7 11.4 M7.2 5.2 L7.2 11.4" fill="none" stroke="#6a6a6a" stroke-width="1"/></svg><div style="left:102px;top:615px;width:260px;height:2px;background:#3a3a3a;"></div><div style="left:222px;top:618px;width:1px;height:3px;background:#3c3c3c;"></div><div style="left:224px;top:618px;width:1px;height:3px;background:#3c3c3c;"></div><div style="left:226px;top:618px;width:1px;height:3px;background:#3c3c3c;"></div><div style="left:228px;top:618px;width:1px;height:3px;background:#3c3c3c;"></div><div style="left:230px;top:618px;width:1px;height:3px;background:#3c3c3c;"></div><div style="left:232px;top:618px;width:1px;height:3px;background:#3c3c3c;"></div><div style="left:234px;top:618px;width:1px;height:3px;background:#3c3c3c;"></div><div style="left:236px;top:618px;width:1px;height:3px;background:#3c3c3c;"></div><div style="left:238px;top:618px;width:1px;height:3px;background:#3c3c3c;"></div><div style="left:240px;top:618px;width:1px;height:3px;background:#3c3c3c;"></div><div style="left:1840px;top:65px;width:80px;height:975px;background:#535353;"></div><div style="left:1840px;top:65px;width:2px;height:975px;background:#3a3a3a;"></div><div style="left:1841px;top:65px;width:79px;height:11px;background:#424242;"></div><div style="left:1841px;top:76px;width:79px;height:1px;background:#3c3c3c;"></div><div style="left:1879px;top:76px;width:1px;height:964px;background:#3c3c3c;"></div><div style="left:1880px;top:76px;width:1px;height:964px;background:#484848;"></div><div style="left:1881px;top:76px;width:1px;height:964px;background:#3c3c3c;"></div><svg style="left:1866px;top:68px;" width="8" height="6" viewBox="0 0 8 6"><path d="M3.2 0.2 L0.3 3 L3.2 5.8 Z M7.6 0.2 L4.7 3 L7.6 5.8 Z" fill="#c8c8c8"/></svg><svg style="left:1906px;top:68px;" width="8" height="6" viewBox="0 0 8 6"><path d="M3.2 0.2 L0.3 3 L3.2 5.8 Z M7.6 0.2 L4.7 3 L7.6 5.8 Z" fill="#c8c8c8"/></svg><div style="left:1842px;top:117px;width:37px;height:1px;background:#3a3a3a;"></div><div style="left:1842px;top:186px;width:37px;height:1px;background:#3a3a3a;"></div><div style="left:1842px;top:227px;width:37px;height:1px;background:#3a3a3a;"></div><div style="left:1842px;top:296px;width:37px;height:1px;background:#3a3a3a;"></div><div style="left:1842px;top:365px;width:37px;height:1px;background:#3a3a3a;"></div><div style="left:1842px;top:462px;width:37px;height:1px;background:#3a3a3a;"></div><div style="left:1842px;top:503px;width:37px;height:1px;background:#3a3a3a;"></div><div style="left:1842px;top:544px;width:37px;height:1px;background:#3a3a3a;"></div><div style="left:1842px;top:585px;width:37px;height:1px;background:#3a3a3a;"></div><div style="left:1842px;top:682px;width:37px;height:1px;background:#3a3a3a;"></div><div style="left:1842px;top:779px;width:37px;height:1px;background:#3a3a3a;"></div><div style="left:1851px;top:80px;width:1px;height:4px;background:#3c3c3c;"></div><div style="left:1853px;top:80px;width:1px;height:4px;background:#3c3c3c;"></div><div style="left:1855px;top:80px;width:1px;height:4px;background:#3c3c3c;"></div><div style="left:1857px;top:80px;width:1px;height:4px;background:#3c3c3c;"></div><div style="left:1859px;top:80px;width:1px;height:4px;background:#3c3c3c;"></div><div style="left:1861px;top:80px;width:1px;height:4px;background:#3c3c3c;"></div><div style="left:1863px;top:80px;width:1px;height:4px;background:#3c3c3c;"></div><div style="left:1865px;top:80px;width:1px;height:4px;background:#3c3c3c;"></div><div style="left:1867px;top:80px;width:1px;height:4px;background:#3c3c3c;"></div><div style="left:1869px;top:80px;width:1px;height:4px;background:#3c3c3c;"></div><div style="left:1851px;top:121px;width:1px;height:4px;background:#3c3c3c;"></div><div style="left:1853px;top:121px;width:1px;height:4px;background:#3c3c3c;"></div><div style="left:1855px;top:121px;width:1px;height:4px;background:#3c3c3c;"></div><div style="left:1857px;top:121px;width:1px;height:4px;background:#3c3c3c;"></div><div style="left:1859px;top:121px;width:1px;height:4px;background:#3c3c3c;"></div><div style="left:1861px;top:121px;width:1px;height:4px;background:#3c3c3c;"></div><div style="left:1863px;top:121px;width:1px;height:4px;background:#3c3c3c;"></div><div style="left:1865px;top:121px;width:1px;height:4px;background:#3c3c3c;"></div><div style="left:1867px;top:121px;width:1px;height:4px;background:#3c3c3c;"></div><div style="left:1869px;top:121px;width:1px;height:4px;background:#3c3c3c;"></div><div style="left:1851px;top:190px;width:1px;height:4px;background:#3c3c3c;"></div><div style="left:1853px;top:190px;width:1px;height:4px;background:#3c3c3c;"></div><div style="left:1855px;top:190px;width:1px;height:4px;background:#3c3c3c;"></div><div style="left:1857px;top:190px;width:1px;height:4px;background:#3c3c3c;"></div><div style="left:1859px;top:190px;width:1px;height:4px;background:#3c3c3c;"></div><div style="left:1861px;top:190px;width:1px;height:4px;background:#3c3c3c;"></div><div style="left:1863px;top:190px;width:1px;height:4px;background:#3c3c3c;"></div><div style="left:1865px;top:190px;width:1px;height:4px;background:#3c3c3c;"></div><div style="left:1867px;top:190px;width:1px;height:4px;background:#3c3c3c;"></div><div style="left:1869px;top:190px;width:1px;height:4px;background:#3c3c3c;"></div><div style="left:1851px;top:231px;width:1px;height:4px;background:#3c3c3c;"></div><div style="left:1853px;top:231px;width:1px;height:4px;background:#3c3c3c;"></div><div style="left:1855px;top:231px;width:1px;height:4px;background:#3c3c3c;"></div><div style="left:1857px;top:231px;width:1px;height:4px;background:#3c3c3c;"></div><div style="left:1859px;top:231px;width:1px;height:4px;background:#3c3c3c;"></div><div style="left:1861px;top:231px;width:1px;height:4px;background:#3c3c3c;"></div><div style="left:1863px;top:231px;width:1px;height:4px;background:#3c3c3c;"></div><div style="left:1865px;top:231px;width:1px;height:4px;background:#3c3c3c;"></div><div style="left:1867px;top:231px;width:1px;height:4px;background:#3c3c3c;"></div><div style="left:1869px;top:231px;width:1px;height:4px;background:#3c3c3c;"></div><div style="left:1851px;top:300px;width:1px;height:4px;background:#3c3c3c;"></div><div style="left:1853px;top:300px;width:1px;height:4px;background:#3c3c3c;"></div><div style="left:1855px;top:300px;width:1px;height:4px;background:#3c3c3c;"></div><div style="left:1857px;top:300px;width:1px;height:4px;background:#3c3c3c;"></div><div style="left:1859px;top:300px;width:1px;height:4px;background:#3c3c3c;"></div><div style="left:1861px;top:300px;width:1px;height:4px;background:#3c3c3c;"></div><div style="left:1863px;top:300px;width:1px;height:4px;background:#3c3c3c;"></div><div style="left:1865px;top:300px;width:1px;height:4px;background:#3c3c3c;"></div><div style="left:1867px;top:300px;width:1px;height:4px;background:#3c3c3c;"></div><div style="left:1869px;top:300px;width:1px;height:4px;background:#3c3c3c;"></div><div style="left:1851px;top:369px;width:1px;height:4px;background:#3c3c3c;"></div><div style="left:1853px;top:369px;width:1px;height:4px;background:#3c3c3c;"></div><div style="left:1855px;top:369px;width:1px;height:4px;background:#3c3c3c;"></div><div style="left:1857px;top:369px;width:1px;height:4px;background:#3c3c3c;"></div><div style="left:1859px;top:369px;width:1px;height:4px;background:#3c3c3c;"></div><div style="left:1861px;top:369px;width:1px;height:4px;background:#3c3c3c;"></div><div style="left:1863px;top:369px;width:1px;height:4px;background:#3c3c3c;"></div><div style="left:1865px;top:369px;width:1px;height:4px;background:#3c3c3c;"></div><div style="left:1867px;top:369px;width:1px;height:4px;background:#3c3c3c;"></div><div style="left:1869px;top:369px;width:1px;height:4px;background:#3c3c3c;"></div><div style="left:1851px;top:466px;width:1px;height:4px;background:#3c3c3c;"></div><div style="left:1853px;top:466px;width:1px;height:4px;background:#3c3c3c;"></div><div style="left:1855px;top:466px;width:1px;height:4px;background:#3c3c3c;"></div><div style="left:1857px;top:466px;width:1px;height:4px;background:#3c3c3c;"></div><div style="left:1859px;top:466px;width:1px;height:4px;background:#3c3c3c;"></div><div style="left:1861px;top:466px;width:1px;height:4px;background:#3c3c3c;"></div><div style="left:1863px;top:466px;width:1px;height:4px;background:#3c3c3c;"></div><div style="left:1865px;top:466px;width:1px;height:4px;background:#3c3c3c;"></div><div style="left:1867px;top:466px;width:1px;height:4px;background:#3c3c3c;"></div><div style="left:1869px;top:466px;width:1px;height:4px;background:#3c3c3c;"></div><div style="left:1851px;top:507px;width:1px;height:4px;background:#3c3c3c;"></div><div style="left:1853px;top:507px;width:1px;height:4px;background:#3c3c3c;"></div><div style="left:1855px;top:507px;width:1px;height:4px;background:#3c3c3c;"></div><div style="left:1857px;top:507px;width:1px;height:4px;background:#3c3c3c;"></div><div style="left:1859px;top:507px;width:1px;height:4px;background:#3c3c3c;"></div><div style="left:1861px;top:507px;width:1px;height:4px;background:#3c3c3c;"></div><div style="left:1863px;top:507px;width:1px;height:4px;background:#3c3c3c;"></div><div style="left:1865px;top:507px;width:1px;height:4px;background:#3c3c3c;"></div><div style="left:1867px;top:507px;width:1px;height:4px;background:#3c3c3c;"></div><div style="left:1869px;top:507px;width:1px;height:4px;background:#3c3c3c;"></div><div style="left:1851px;top:548px;width:1px;height:4px;background:#3c3c3c;"></div><div style="left:1853px;top:548px;width:1px;height:4px;background:#3c3c3c;"></div><div style="left:1855px;top:548px;width:1px;height:4px;background:#3c3c3c;"></div><div style="left:1857px;top:548px;width:1px;height:4px;background:#3c3c3c;"></div><div style="left:1859px;top:548px;width:1px;height:4px;background:#3c3c3c;"></div><div style="left:1861px;top:548px;width:1px;height:4px;background:#3c3c3c;"></div><div style="left:1863px;top:548px;width:1px;height:4px;background:#3c3c3c;"></div><div style="left:1865px;top:548px;width:1px;height:4px;background:#3c3c3c;"></div><div style="left:1867px;top:548px;width:1px;height:4px;background:#3c3c3c;"></div><div style="left:1869px;top:548px;width:1px;height:4px;background:#3c3c3c;"></div><div style="left:1851px;top:589px;width:1px;height:4px;background:#3c3c3c;"></div><div style="left:1853px;top:589px;width:1px;height:4px;background:#3c3c3c;"></div><div style="left:1855px;top:589px;width:1px;height:4px;background:#3c3c3c;"></div><div style="left:1857px;top:589px;width:1px;height:4px;background:#3c3c3c;"></div><div style="left:1859px;top:589px;width:1px;height:4px;background:#3c3c3c;"></div><div style="left:1861px;top:589px;width:1px;height:4px;background:#3c3c3c;"></div><div style="left:1863px;top:589px;width:1px;height:4px;background:#3c3c3c;"></div><div style="left:1865px;top:589px;width:1px;height:4px;background:#3c3c3c;"></div><div style="left:1867px;top:589px;width:1px;height:4px;background:#3c3c3c;"></div><div style="left:1869px;top:589px;width:1px;height:4px;background:#3c3c3c;"></div><div style="left:1851px;top:686px;width:1px;height:4px;background:#3c3c3c;"></div><div style="left:1853px;top:686px;width:1px;height:4px;background:#3c3c3c;"></div><div style="left:1855px;top:686px;width:1px;height:4px;background:#3c3c3c;"></div><div style="left:1857px;top:686px;width:1px;height:4px;background:#3c3c3c;"></div><div style="left:1859px;top:686px;width:1px;height:4px;background:#3c3c3c;"></div><div style="left:1861px;top:686px;width:1px;height:4px;background:#3c3c3c;"></div><div style="left:1863px;top:686px;width:1px;height:4px;background:#3c3c3c;"></div><div style="left:1865px;top:686px;width:1px;height:4px;background:#3c3c3c;"></div><div style="left:1867px;top:686px;width:1px;height:4px;background:#3c3c3c;"></div><div style="left:1869px;top:686px;width:1px;height:4px;background:#3c3c3c;"></div><div style="left:1891px;top:80px;width:1px;height:4px;background:#3c3c3c;"></div><div style="left:1893px;top:80px;width:1px;height:4px;background:#3c3c3c;"></div><div style="left:1895px;top:80px;width:1px;height:4px;background:#3c3c3c;"></div><div style="left:1897px;top:80px;width:1px;height:4px;background:#3c3c3c;"></div><div style="left:1899px;top:80px;width:1px;height:4px;background:#3c3c3c;"></div><div style="left:1901px;top:80px;width:1px;height:4px;background:#3c3c3c;"></div><div style="left:1903px;top:80px;width:1px;height:4px;background:#3c3c3c;"></div><div style="left:1905px;top:80px;width:1px;height:4px;background:#3c3c3c;"></div><div style="left:1907px;top:80px;width:1px;height:4px;background:#3c3c3c;"></div><div style="left:1909px;top:80px;width:1px;height:4px;background:#3c3c3c;"></div><div style="left:1882px;top:145px;width:38px;height:1px;background:#3a3a3a;"></div><div style="left:1919px;top:76px;width:1px;height:964px;background:#3e3e3e;"></div><svg style="left:1840px;top:64px" width="80" height="720" viewBox="1840 64 80 720"><path d="M1893.4 95.5 L1909.6 95.5" stroke="#c8c8c8" stroke-width="1.1"/><circle cx="1898" cy="95.5" r="2" fill="#535353" stroke="#c8c8c8" stroke-width="1.1"/><path d="M1893.4 100.5 L1909.6 100.5" stroke="#c8c8c8" stroke-width="1.1"/><circle cx="1905" cy="100.5" r="2" fill="#535353" stroke="#c8c8c8" stroke-width="1.1"/><path d="M1893.4 105.7 L1909.6 105.7" stroke="#c8c8c8" stroke-width="1.1"/><circle cx="1900" cy="105.7" r="2" fill="#535353" stroke="#c8c8c8" stroke-width="1.1"/><path d="M1905 120.6 L1894.8 120.6 C1894 120.6 1893.4 121.2 1893.4 122 L1893.4 132.6 C1893.4 133.4 1894 134 1894.8 134" fill="none" stroke="#c8c8c8" stroke-width="1.1"/><rect x="1895.4" y="122.6" width="13" height="13.2" rx="1.2" fill="none" stroke="#c8c8c8" stroke-width="1.1"/><path d="M1902.4 122.6 L1905.8 122.6 L1905.8 129.8 L1904.1 128.4 L1902.4 129.8 Z" fill="#c8c8c8"/><path d="M1862.6 93 C1868 93 1871.2 96.6 1871.2 100 C1871.2 104.4 1867 107 1862.4 107 C1859.4 107 1858 105.6 1858.2 103.6 C1858.4 102 1857.6 101.4 1855.8 101.4 L1852.6 101.6 C1852 99.4 1854 97.6 1856.6 98.6 C1859.2 99.6 1860 98.4 1859.4 96.6 C1859 95 1860.2 93 1862.6 93 Z" fill="#c8c8c8"/><circle cx="1865.6" cy="96.2" r="1.1" fill="#535353"/><circle cx="1868.2" cy="99.4" r="1.2" fill="#535353"/><circle cx="1867.2" cy="103" r="1.3" fill="#535353"/><circle cx="1863.6" cy="104.4" r="1.3" fill="#535353"/><circle cx="1860.6" cy="103.6" r="1.1" fill="#535353"/><path d="M1854 140 L1854 149.2 L1869 149.2 L1869 141" fill="none" stroke="#c8c8c8" stroke-width="1.6"/><path d="M1857 134.6 L1859 134.6" stroke="#c8c8c8" stroke-width="1.4"/><path d="M1862 142.4 L1870 134.2 M1864.4 133.2 L1871 133.2 L1871 139.8" fill="none" stroke="#c8c8c8" stroke-width="1.7"/><path d="M1854 167.6 L1854 161 L1862 161 L1862 167.6 M1851.4 167.6 L1869.6 167.6 L1869.6 177.2 L1851.4 177.2 Z" fill="none" stroke="#c8c8c8" stroke-width="1.1"/><rect x="1852.8" y="700.4" width="17.4" height="1.2" fill="#c8c8c8"/><rect x="1852.8" y="704.6" width="17.4" height="2.2" fill="#c8c8c8"/><rect x="1852.8" y="709.4" width="17.4" height="3.2" fill="#c8c8c8"/><circle cx="1858.6" cy="760.4" r="6.2" fill="#c2c2c2"/><circle cx="1863.6" cy="765.4" r="5.8" fill="#8a8888" stroke="#c8c8c8" stroke-width="1.1"/><rect x="1853.3" y="604.3" width="15.8" height="10.4" fill="#7c7878" stroke="#c8c8c8" stroke-width="1.1"/><path d="M1853.3 609.5 L1869 609.5 M1858.5 604.3 L1858.5 614.7 M1863.8 604.3 L1863.8 614.7" stroke="#c8c8c8" stroke-width="1.1"/><rect x="1859" y="604.9" width="4.3" height="4" fill="#bdbdbd"/><rect x="1857.2" y="640.6" width="8.8" height="6.4" rx="0.6" fill="#c8c8c8"/><path d="M1858.8 640 L1856 634.6 M1861 640 L1860.4 632.6 M1863.6 640 L1866.6 634" stroke="#c8c8c8" stroke-width="1.1"/><path d="M1854.4 631 C1855.6 630 1857.4 632 1857.4 635.4 C1855.4 635.6 1853.4 633 1854.4 631 Z M1860 627 C1861.8 628 1862 631 1861.2 633.4 L1859.2 633.2 C1858.6 631 1858.8 628.4 1860 627 Z M1864.6 632.2 C1866 630.6 1869 631.4 1869.8 633.4 C1868.6 635 1866.6 635.6 1865.4 635.2 Z" fill="#c8c8c8"/><circle cx="1861.5" cy="661" r="4" fill="#c8c8c8"/><circle cx="1857.6" cy="666.4" r="4" fill="#c8c8c8"/><circle cx="1865.4" cy="666.4" r="4" fill="#c8c8c8"/><path d="M1861.5 664 L1861.5 672 M1858 672.8 L1865 672.8" stroke="#c8c8c8" stroke-width="1.4"/><circle cx="1860.2" cy="486.8" r="7.8" fill="#c8c8c8"/><circle cx="1861.2" cy="486.8" r="8.6" fill="none" stroke="#c8c8c8" stroke-width="1" stroke-dasharray="12 3"/><rect x="1858.6" y="477" width="3.4" height="3.4" rx="1" fill="#c8c8c8"/><rect x="1858.6" y="493.4" width="3.4" height="3.4" rx="0.6" fill="#c8c8c8"/><circle cx="1868.6" cy="486.8" r="1.6" fill="#c8c8c8"/><path d="M1866 480.6 A 8 8 0 0 1 1866 493" fill="none" stroke="#535353" stroke-width="1.1"/><path d="M1853 217 L1861 203.4 L1864 203.4 L1866.4 216 L1868 217.4 L1862 217.4 L1863.4 216 L1862.8 212.6 L1857.4 212.6 L1855.8 216 L1857 217.4 L1852 217.4 Z" fill="#c8c8c8"/><path d="M1858.4 211 L1862.6 211 L1861.8 205.8 Z" fill="#535353"/><path d="M1858 245 L1866 245 L1866 259.4 L1864.8 259.4 L1864.8 246.4 L1862.4 246.4 L1862.4 259.4 L1861.2 259.4 L1861.2 252.6 L1858 252.6 C1855 252.6 1855 245 1858 245 Z" fill="#c8c8c8"/><path d="M1859 272 C1869 270 1871 288 1859 288 C1866 286 1866 274 1859 272 Z" fill="#9a9a9a"/><path d="M1860.7 323.8 L1865 312.3 L1866.7 312.3 L1871 323.8 L1869.3 323.8 L1868.1 320.6 L1863.5 320.6 L1862.3 323.8 Z M1864 319.2 L1867.6 319.2 L1865.8 314.2 Z" fill="#c8c8c8" fill-rule="evenodd"/><path d="M1862 322.6 L1859.6 322.6 L1859.6 328 L1862 328" fill="none" stroke="#c8c8c8" stroke-width="1.5"/><path d="M1861.4 340.4 L1869 340.4 L1869 352.8 L1867.8 352.8 L1867.8 341.6 L1865.8 341.6 L1865.8 352.8 L1864.6 352.8 L1864.6 347.4 L1861.4 347.4 C1858 347.4 1858 340.4 1861.4 340.4 Z" fill="#c8c8c8"/><path d="M1862 350.6 L1859.6 350.6 L1859.6 356 L1862 356" fill="none" stroke="#c8c8c8" stroke-width="1.5"/><rect x="1855" y="384.2" width="12.4" height="11.2" fill="none" stroke="#c8c8c8" stroke-width="1.1"/><rect x="1853.4" y="382.6" width="3" height="3" fill="#c8c8c8"/><rect x="1859.8" y="382.6" width="3" height="3" fill="#c8c8c8"/><rect x="1866" y="382.6" width="3" height="3" fill="#c8c8c8"/><rect x="1866" y="388.4" width="3" height="3" fill="#c8c8c8"/><rect x="1866" y="394" width="3" height="3" fill="#c8c8c8"/><rect x="1859.8" y="394" width="3" height="3" fill="#c8c8c8"/><rect x="1853.4" y="394" width="3" height="3" fill="#c8c8c8"/><rect x="1853.4" y="388.4" width="3" height="3" fill="#c8c8c8"/><rect x="1859" y="410.8" width="5" height="6" fill="#c8c8c8"/><rect x="1853" y="418.8" width="16" height="5" fill="#c8c8c8"/><rect x="1859" y="438" width="4" height="4" fill="#c8c8c8"/><rect x="1854" y="443.4" width="4" height="3.4" fill="#c8c8c8"/><rect x="1859" y="443" width="10" height="10" fill="#c8c8c8"/><rect x="1859.6" y="443.6" width="3.4" height="3.4" fill="#b0b0b0" stroke="#535353" stroke-width="0.6"/></svg><div style="left:1854px;top:561px;width:16px;height:15px;border-radius:0 16px 0 0;border:1px solid #d4d4d4;background:radial-gradient(circle at 100% 100%,#f4f4f4 0%,#bdbdbd 30%,#6a6a6a 65%,#1c1c1c 100%);"></div><div style="left:1853px;top:728px;width:17px;height:12px;border:1px solid #d0d0d0;background:linear-gradient(90deg,#242424 5%,#8a8888 55%,#d8d8d8 95%);"></div><div style="left:1847px;top:515px;width:28px;height:24px;background:#2d2c2f;border:1px solid #5c5c5c;border-radius:4px;"></div><svg style="left:1853px;top:519px;" width="18" height="18" viewBox="0 0 18 18"><path d="M0.8 14.8 L6.4 2 L8.4 2 L14 14.8 L12 14.8 L10.4 11 L4.4 11 L2.8 14.8 Z M5 9.4 L9.8 9.4 L7.4 3.8 Z" fill="#e8e8e8" fill-rule="evenodd"/><path d="M15.8 0.2 L15.8 17.4" stroke="#e8e8e8" stroke-width="1"/></svg><div style="left:1605px;top:501px;width:235px;height:393px;background:#535353;border-left:1px solid #3a3a3a;border-bottom:1px solid #3a3a3a;"></div><div style="left:1605px;top:501px;width:235px;height:4px;background:#383838;"></div><div style="left:1606px;top:505px;width:234px;height:27px;background:#424242;"></div><div style="left:1606px;top:505px;width:69px;height:27px;background:#535353;"></div><div style="left:1675px;top:505px;width:1px;height:27px;background:#3a3a3a;"></div><div style="left:1606px;top:531px;width:234px;height:1px;background:#3c3c3c;"></div><div style="left:1821px;top:511px;width:17px;height:15px;background:#363636;border:1px solid #5e5e5e;border-radius:3px;"></div><div style="left:1824px;top:515.5px;width:10px;height:1px;background:#c8c8c8;"></div><div style="left:1824px;top:518.5px;width:10px;height:1px;background:#c8c8c8;"></div><div style="left:1824px;top:521.5px;width:10px;height:1px;background:#c8c8c8;"></div><div style="left:1810px;top:539px;width:24px;height:19px;background:#4a4a4a;border:1px solid #5e5e5e;border-radius:3px;"></div><svg style="left:0;top:0;overflow:visible" width="1" height="1"><path d="M1821.8999999999999 546.9 L1825.6 550.6999999999999 L1829.3 546.9" fill="none" stroke="#f4f4f4" stroke-width="1.4"/></svg><div style="left:1810px;top:565px;width:24px;height:19px;background:#4a4a4a;border:1px solid #5e5e5e;border-radius:3px;"></div><svg style="left:0;top:0;overflow:visible" width="1" height="1"><path d="M1821.8999999999999 572.9 L1825.6 576.6999999999999 L1829.3 572.9" fill="none" stroke="#f4f4f4" stroke-width="1.4"/></svg><div style="left:1810px;top:598px;width:24px;height:19px;background:#4a4a4a;border:1px solid #5e5e5e;border-radius:3px;"></div><svg style="left:0;top:0;overflow:visible" width="1" height="1"><path d="M1821.8999999999999 605.9 L1825.6 609.6999999999999 L1829.3 605.9" fill="none" stroke="#f4f4f4" stroke-width="1.4"/></svg><div style="left:1810px;top:624px;width:24px;height:19px;background:#4a4a4a;border:1px solid #5e5e5e;border-radius:3px;"></div><svg style="left:0;top:0;overflow:visible" width="1" height="1"><path d="M1821.8999999999999 631.9 L1825.6 635.6999999999999 L1829.3 631.9" fill="none" stroke="#f4f4f4" stroke-width="1.4"/></svg><div style="left:1810px;top:657px;width:24px;height:19px;background:#4a4a4a;border:1px solid #5e5e5e;border-radius:3px;"></div><svg style="left:0;top:0;overflow:visible" width="1" height="1"><path d="M1821.8999999999999 664.9 L1825.6 668.6999999999999 L1829.3 664.9" fill="none" stroke="#f4f4f4" stroke-width="1.4"/></svg><div style="left:1810px;top:683px;width:24px;height:19px;background:#4a4a4a;border:1px solid #5e5e5e;border-radius:3px;"></div><svg style="left:0;top:0;overflow:visible" width="1" height="1"><path d="M1821.8999999999999 690.9 L1825.6 694.6999999999999 L1829.3 690.9" fill="none" stroke="#f4f4f4" stroke-width="1.4"/></svg><div style="left:1810px;top:742px;width:24px;height:19px;background:#575757;border:1px solid #595959;border-radius:3px;"></div><svg style="left:0;top:0;overflow:visible" width="1" height="1"><path d="M1821.8999999999999 749.9 L1825.6 753.6999999999999 L1829.3 749.9" fill="none" stroke="#6a6a6a" stroke-width="1.4"/></svg><div style="left:1810px;top:775px;width:24px;height:19px;background:#4a4a4a;border:1px solid #5e5e5e;border-radius:3px;"></div><svg style="left:0;top:0;overflow:visible" width="1" height="1"><path d="M1821.8999999999999 782.9 L1825.6 786.6999999999999 L1829.3 782.9" fill="none" stroke="#f4f4f4" stroke-width="1.4"/></svg><div style="left:1810px;top:801px;width:24px;height:19px;background:#4a4a4a;border:1px solid #5e5e5e;border-radius:3px;"></div><svg style="left:0;top:0;overflow:visible" width="1" height="1"><path d="M1821.8999999999999 808.9 L1825.6 812.6999999999999 L1829.3 808.9" fill="none" stroke="#f4f4f4" stroke-width="1.4"/></svg><div style="left:1812px;top:590px;width:23px;height:2px;background:#474747;"></div><div style="left:1812px;top:649px;width:23px;height:2px;background:#474747;"></div><div style="left:1812px;top:708px;width:23px;height:2px;background:#474747;"></div><div style="left:1812px;top:734px;width:23px;height:2px;background:#474747;"></div><div style="left:1812px;top:767px;width:23px;height:2px;background:#474747;"></div><div style="left:1812px;top:826px;width:23px;height:2px;background:#474747;"></div><span class="t" style="left:1820.6px;top:717px;font-size:12px;line-height:12px;color:#d0d0d0;font-family:"Liberation Serif", serif;transform:scaleX(1.0349);">F</span><div style="left:1820px;top:721.4px;width:9px;height:1px;background:#d0d0d0;"></div><div style="left:1812px;top:862px;width:23px;height:25px;background:#5a5a5a;border-radius:3px;"></div><svg style="left:1819px;top:868px;" width="10" height="14" viewBox="0 0 10 14"><rect x="3.4" y="0.8" width="2.6" height="2.6" fill="none" stroke="#727272" stroke-width="0.9"/><path d="M1 6 L4.6 6 L7.4 13 M3.4 6.2 L2.6 9" fill="none" stroke="#727272" stroke-width="1.2"/></svg><div style="left:1617px;top:101px;width:242px;height:343px;background:#535353;border:1px solid #383838;border-radius:3px 3px 0 0;box-shadow:0 1px 4px rgba(0,0,0,.35);"></div><div style="left:1618px;top:102px;width:240px;height:13px;background:#424242;border-radius:2px 2px 0 0;"></div><div style="left:1618px;top:114px;width:240px;height:1px;background:#383838;"></div><div style="left:1618px;top:115px;width:240px;height:27px;background:#424242;"></div><div style="left:1618px;top:141px;width:240px;height:1px;background:#3c3c3c;"></div><div style="left:1618px;top:115px;width:73px;height:27px;background:#535353;"></div><div style="left:1691px;top:115px;width:1px;height:27px;background:#3a3a3a;"></div><div style="left:1776px;top:115px;width:1px;height:26px;background:#4e4e4e;"></div><span class="t" style="left:1627px;top:124px;font-size:10.2px;line-height:10.2px;color:#f4f4f4;text-rendering:geometricPrecision;font-weight:700;transform:scaleX(0.9361);">Appearance</span><span class="t" style="left:1700.2px;top:124px;font-size:10.2px;line-height:10.2px;color:#a2a2a2;text-rendering:geometricPrecision;font-weight:700;transform:scaleX(0.9251);">Graphic Styles</span><svg style="left:1828px;top:106px;" width="8" height="6" viewBox="0 0 8 6"><path d="M3.2 0.2 L0.3 3 L3.2 5.8 Z M7.6 0.2 L4.7 3 L7.6 5.8 Z" fill="#d0d0d0"/></svg><svg style="left:1847px;top:106px;" width="7" height="7" viewBox="0 0 7 7"><path d="M1 1 L6 6 M6 1 L1 6" stroke="#d0d0d0" stroke-width="1.8"/></svg><div style="left:1842px;top:125.0px;width:10px;height:1px;background:#b8b8b8;"></div><div style="left:1842px;top:128.4px;width:10px;height:1px;background:#b8b8b8;"></div><div style="left:1842px;top:131.8px;width:10px;height:1px;background:#b8b8b8;"></div><div style="left:1623px;top:148px;width:230px;height:268px;border:1px solid #5e5e5e;border-radius:2px;"></div><div style="left:1624px;top:173px;width:228px;height:1px;background:#5e5e5e;"></div><div style="left:1624px;top:198px;width:228px;height:1px;background:#5e5e5e;"></div><div style="left:1624px;top:223px;width:228px;height:1px;background:#5e5e5e;"></div><div style="left:1624px;top:248px;width:228px;height:1px;background:#5e5e5e;"></div><div style="left:1624px;top:273px;width:228px;height:1px;background:#5e5e5e;"></div><span class="t" style="left:1674.2px;top:158px;font-size:10.2px;line-height:10.2px;color:#ececec;text-rendering:geometricPrecision;-webkit-text-stroke:.3px;transform:scaleX(0.9644);">Type: No Appearance</span><span class="t" style="left:1674.2px;top:183px;font-size:10.2px;line-height:10.2px;color:#ececec;text-rendering:geometricPrecision;font-weight:700;transform:scaleX(1.0144);">Characters</span><div style="left:1626px;top:176px;width:20px;height:20px;background:#000;border:1px solid #fff;"></div><svg style="left:1629px;top:206px;" width="14" height="10" viewBox="0 0 14 10"><path d="M0.6 5 C3.2 0.6 10.8 0.6 13.4 5 C10.8 9.4 3.2 9.4 0.6 5 Z" fill="none" stroke="#6d6a6a" stroke-width="1.2"/><circle cx="7" cy="5" r="2.4" fill="#6d6a6a"/><circle cx="7" cy="5" r="0.9" fill="#535353"/></svg><div style="left:1648px;top:199px;width:1px;height:24px;border-left:1px dashed #333;"></div><svg style="left:1629px;top:231px;" width="14" height="10" viewBox="0 0 14 10"><path d="M0.6 5 C3.2 0.6 10.8 0.6 13.4 5 C10.8 9.4 3.2 9.4 0.6 5 Z" fill="none" stroke="#6d6a6a" stroke-width="1.2"/><circle cx="7" cy="5" r="2.4" fill="#6d6a6a"/><circle cx="7" cy="5" r="0.9" fill="#535353"/></svg><div style="left:1648px;top:224px;width:1px;height:24px;border-left:1px dashed #333;"></div><svg style="left:1629px;top:256px;" width="14" height="10" viewBox="0 0 14 10"><path d="M0.6 5 C3.2 0.6 10.8 0.6 13.4 5 C10.8 9.4 3.2 9.4 0.6 5 Z" fill="none" stroke="#6d6a6a" stroke-width="1.2"/><circle cx="7" cy="5" r="2.4" fill="#6d6a6a"/><circle cx="7" cy="5" r="0.9" fill="#535353"/></svg><div style="left:1648px;top:249px;width:1px;height:24px;border-left:1px dashed #333;"></div><span class="t" style="left:1674.2px;top:208px;font-size:10.2px;line-height:10.2px;color:#ececec;text-rendering:geometricPrecision;-webkit-text-stroke:.3px;transform:scaleX(0.9541);">Stroke:</span><div style="left:1674.2px;top:217px;width:30.8px;height:0;border-top:1px dotted #c4c4c4;"></div><div style="left:1716px;top:202px;width:18px;height:18px;background:#fff;border:1px solid #222;box-shadow:inset 0 0 0 1px #fff;"></div><svg style="left:1717px;top:203px;" width="16" height="16" viewBox="0 0 16 16"><rect x="1.5" y="1.5" width="13" height="13" fill="#fff" stroke="#333" stroke-width="1"/><path d="M3.4 12.6 L12.6 3.4" stroke="#e8141e" stroke-width="1.8"/></svg><span class="t" style="left:1674.2px;top:233px;font-size:10.2px;line-height:10.2px;color:#ececec;text-rendering:geometricPrecision;-webkit-text-stroke:.3px;transform:scaleX(0.9467);">Fill:</span><div style="left:1716px;top:227px;width:18px;height:18px;background:#fff;border:1px solid #222;"></div><div style="left:1718px;top:229px;width:14px;height:14px;background:#000;border:1px solid #333;box-shadow:inset 0 0 0 1px #fff;"></div><div style="left:1720px;top:231px;width:10px;height:10px;background:#000;"></div><span class="t" style="left:1674.2px;top:258px;font-size:10.2px;line-height:10.2px;color:#ececec;text-rendering:geometricPrecision;-webkit-text-stroke:.3px;transform:scaleX(0.9739);">Opacity:</span><div style="left:1674.2px;top:267px;width:36.4px;height:0;border-top:1px dotted #c4c4c4;"></div><span class="t" style="left:1715.9px;top:258px;font-size:10.2px;line-height:10.2px;color:#ececec;text-rendering:geometricPrecision;-webkit-text-stroke:.3px;transform:scaleX(0.9944);">Default</span><div style="left:1630px;top:420px;width:11px;height:11px;border:1.5px solid #7a7575;"></div><div style="left:1656px;top:420px;width:11px;height:11px;border:1.5px solid #7a7575;"></div><div style="left:1658.5px;top:422.5px;width:6px;height:6px;background:#7a7575;"></div><span class="t" style="left:1682px;top:418px;font-size:14px;line-height:14px;color:#d4d4d4;transform:scaleX(1.0560);font-style:italic;">fx</span><svg style="left:1694px;top:428px;" width="4" height="3" viewBox="0 0 4 3"><path d="M0 0 L4 0 L2 2.6 Z" fill="#d0d0d0"/></svg><svg style="left:1766px;top:419px;" width="13" height="13" viewBox="0 0 13 13"><circle cx="6.3" cy="6.3" r="4.9" fill="none" stroke="#d4d4d4" stroke-width="1.9"/><path d="M2.8 2.8 L9.8 9.8" stroke="#d4d4d4" stroke-width="1.9"/></svg><svg style="left:1794px;top:420px;" width="12" height="12" viewBox="0 0 12 12"><rect x="0.6" y="0.6" width="10" height="10" fill="none" stroke="#7a7575" stroke-width="1.1"/><path d="M3.4 5.6 L7.8 5.6 M5.6 3.4 L5.6 7.8" stroke="#7a7575" stroke-width="1"/></svg><svg style="left:1819px;top:418px;" width="12" height="14" viewBox="0 0 12 14"><path d="M0.6 3.2 L10.8 3.2 M3.6 3 L4.2 1.2 L7.2 1.2 L7.8 3 M1.6 3.4 L2.2 13 L9.2 13 L9.8 3.4 M4.2 5.2 L4.2 11.4 M5.7 5.2 L5.7 11.4 M7.2 5.2 L7.2 11.4" fill="none" stroke="#7a7575" stroke-width="1"/></svg><div style="left:1618px;top:435px;width:240px;height:2px;background:#3a3a3a;"></div><div style="left:1728px;top:438px;width:1px;height:3px;background:#3c3c3c;"></div><div style="left:1730px;top:438px;width:1px;height:3px;background:#3c3c3c;"></div><div style="left:1732px;top:438px;width:1px;height:3px;background:#3c3c3c;"></div><div style="left:1734px;top:438px;width:1px;height:3px;background:#3c3c3c;"></div><div style="left:1736px;top:438px;width:1px;height:3px;background:#3c3c3c;"></div><div style="left:1738px;top:438px;width:1px;height:3px;background:#3c3c3c;"></div><div style="left:1740px;top:438px;width:1px;height:3px;background:#3c3c3c;"></div><div style="left:1742px;top:438px;width:1px;height:3px;background:#3c3c3c;"></div><div style="left:1744px;top:438px;width:1px;height:3px;background:#3c3c3c;"></div><div style="left:1746px;top:438px;width:1px;height:3px;background:#3c3c3c;"></div><div style="left:1542px;top:511px;width:278px;height:472px;background:#f1f1f1;border:1px solid #f7f7f7;box-shadow:2px 2px 4px rgba(0,0,0,.45);"></div><span class="t" style="left:1577.4px;top:519px;font-size:12px;line-height:12px;color:#000;transform:scaleX(1.0047);">Hide Options</span><div style="left:1573px;top:539px;width:244px;height:1px;background:#d2d2d2;"></div><div style="left:1545px;top:543px;width:22px;height:22px;background:#91c9f7;"></div><svg style="left:1545px;top:543px;" width="22" height="22" viewBox="0 0 22 22"><path d="M6.2 10 L9.7 13.4 L15.8 6.8" fill="none" stroke="#2a2a2a" stroke-width="1.3"/></svg><span class="t" style="left:1577.4px;top:548px;font-size:12px;line-height:12px;color:#000;transform:scaleX(0.9780);">Show Snap to Glyph Options</span><div style="left:1573px;top:568px;width:244px;height:1px;background:#d2d2d2;"></div><span class="t" style="left:1577.4px;top:577px;font-size:12px;line-height:12px;color:#000;">Show Font Height Options</span><div style="left:1573px;top:597px;width:244px;height:1px;background:#d2d2d2;"></div><div style="left:1545px;top:601px;width:22px;height:22px;background:#91c9f7;"></div><svg style="left:1545px;top:601px;" width="22" height="22" viewBox="0 0 22 22"><path d="M6.2 10 L9.7 13.4 L15.8 6.8" fill="none" stroke="#2a2a2a" stroke-width="1.3"/></svg><span class="t" style="left:1577.4px;top:606px;font-size:12px;line-height:12px;color:#000;transform:scaleX(0.9907);">Standard Vertical Roman Alignment</span><div style="left:1573px;top:626px;width:244px;height:1px;background:#d2d2d2;"></div><span class="t" style="left:1577.4px;top:635px;font-size:12px;line-height:12px;color:#000;transform:scaleX(0.9664);">Touch Type Tool</span><div style="left:1545px;top:652px;width:22px;height:22px;background:#91c9f7;"></div><svg style="left:1545px;top:652px;" width="22" height="22" viewBox="0 0 22 22"><path d="M6.2 10 L9.7 13.4 L15.8 6.8" fill="none" stroke="#2a2a2a" stroke-width="1.3"/></svg><span class="t" style="left:1577.4px;top:657px;font-size:12px;line-height:12px;color:#000;transform:scaleX(0.9956);">Enable in-menu font previews</span><div style="left:1573px;top:677px;width:244px;height:1px;background:#d2d2d2;"></div><span class="t" style="left:1577.4px;top:686px;font-size:12px;line-height:12px;color:#000;transform:scaleX(0.9555);">All Caps</span><span class="t" style="left:1577.4px;top:708px;font-size:12px;line-height:12px;color:#000;transform:scaleX(0.9404);">Small Caps</span><span class="t" style="left:1577.4px;top:730px;font-size:12px;line-height:12px;color:#000;transform:scaleX(0.9670);">Superscript</span><span class="t" style="left:1577.4px;top:752px;font-size:12px;line-height:12px;color:#000;transform:scaleX(0.9734);">Subscript</span><div style="left:1573px;top:772px;width:244px;height:1px;background:#d2d2d2;"></div><div style="left:1545px;top:776px;width:22px;height:22px;background:#91c9f7;"></div><svg style="left:1545px;top:776px;" width="22" height="22" viewBox="0 0 22 22"><path d="M6.2 10 L9.7 13.4 L15.8 6.8" fill="none" stroke="#2a2a2a" stroke-width="1.3"/></svg><span class="t" style="left:1577.4px;top:781px;font-size:12px;line-height:12px;color:#000;transform:scaleX(0.9859);">Fractional Widths</span><span class="t" style="left:1577.4px;top:803px;font-size:12px;line-height:12px;color:#000;transform:scaleX(0.9638);">System Layout</span><div style="left:1573px;top:823px;width:244px;height:1px;background:#d2d2d2;"></div><span class="t" style="left:1577.4px;top:832px;font-size:12px;line-height:12px;color:#000;transform:scaleX(0.9534);">No Break</span><div style="left:1573px;top:852px;width:244px;height:1px;background:#d2d2d2;"></div><div style="left:1545px;top:856px;width:22px;height:22px;background:#91c9f7;"></div><svg style="left:1545px;top:856px;" width="22" height="22" viewBox="0 0 22 22"><path d="M6.2 10 L9.7 13.4 L15.8 6.8" fill="none" stroke="#2a2a2a" stroke-width="1.3"/></svg><span class="t" style="left:1577.4px;top:861px;font-size:12px;line-height:12px;color:#000;transform:scaleX(0.9195);">Kashidas</span><div style="left:1573px;top:881px;width:244px;height:1px;background:#d2d2d2;"></div><div style="left:1545px;top:885px;width:272px;height:22px;background:#91c9f7;"></div><div style="left:1545px;top:885px;width:22px;height:22px;background:#5aaef2;"></div><svg style="left:1545px;top:885px;" width="22" height="22" viewBox="0 0 22 22"><path d="M6.2 10 L9.7 13.4 L15.8 6.8" fill="none" stroke="#2a2a2a" stroke-width="1.3"/></svg><span class="t" style="left:1577.4px;top:890px;font-size:12px;line-height:12px;color:#000;transform:scaleX(0.9919);">Default Direction</span><span class="t" style="left:1577.4px;top:912px;font-size:12px;line-height:12px;color:#000;">Right-to-Left Character Direction</span><span class="t" style="left:1577.4px;top:934px;font-size:12px;line-height:12px;color:#000;">Left-to-Right Character Direction</span><div style="left:1573px;top:954px;width:244px;height:1px;background:#d2d2d2;"></div><span class="t" style="left:1577.4px;top:963px;font-size:12px;line-height:12px;color:#000;transform:scaleX(0.9071);">Reset Panel</span><div style="left:0px;top:1040px;width:1920px;height:40px;background:#0c1f31;"></div><div style="left:4px;top:1040px;width:1px;height:40px;background:#4a5866;"></div><svg style="left:24px;top:1051px;" width="18" height="18" viewBox="0 0 18 18"><path d="M1.5 1.5 L16.5 1.5 L16.5 13.2 L11 13.2 L8.6 15.8 L6.2 13.2 L1.5 13.2 Z" fill="none" stroke="#f2f2f2" stroke-width="1.2"/></svg><span class="t" style="left:74.9px;top:1045px;font-size:12px;line-height:12px;color:#f2f2f2;transform:scaleX(0.8891);">22:23</span><span class="t" style="left:59.2px;top:1063px;font-size:12px;line-height:12px;color:#f2f2f2;transform:scaleX(0.9457);">05/01/2021</span><span class="t" style="left:131px;top:1046px;font-size:12px;line-height:12px;color:#f2f2f2;direction:rtl;transform:scaleX(1.0059);">עבר</span><span class="t" style="left:134.3px;top:1063px;font-size:12px;line-height:12px;color:#f2f2f2;transform:scaleX(0.8817);">HE</span><svg style="left:163px;top:1053px;" width="17" height="15" viewBox="0 0 17 15"><rect x="2.6" y="1.2" width="13" height="8.6" fill="none" stroke="#f2f2f2" stroke-width="1.1"/><path d="M9 9.8 L9 13 M5.4 13.4 L12.6 13.4" stroke="#f2f2f2" stroke-width="1.1"/><rect x="0.6" y="2.8" width="3.4" height="3" fill="#0c1f31" stroke="#f2f2f2" stroke-width="0.9"/><path d="M2.3 5.8 L2.3 13" stroke="#f2f2f2" stroke-width="1"/></svg><svg style="left:186px;top:1052px;" width="18" height="16" viewBox="0 0 18 16"><path d="M1.2 5.6 L3.8 5.6 L7 2.4 L7 13.4 L3.8 10.2 L1.2 10.2 Z" fill="none" stroke="#f2f2f2" stroke-width="1.1"/><path d="M9.4 5.8 C10.6 7 10.6 9 9.4 10.2" fill="none" stroke="#f2f2f2" stroke-width="1"/><path d="M11.4 3.8 C13.6 6 13.6 10 11.4 12.2" fill="none" stroke="#9aa4ad" stroke-width="1"/><path d="M13.6 1.8 C16.8 5 16.8 11 13.6 14.2" fill="none" stroke="#6d7984" stroke-width="1"/></svg><svg style="left:212px;top:1055px;" width="14" height="9" viewBox="0 0 14 9"><path d="M1 7.6 L7 1.6 L13 7.6" fill="none" stroke="#f2f2f2" stroke-width="1.3"/></svg><div style="left:1381px;top:1040px;width:48px;height:40px;background:#084f8c;"></div><div style="left:1336px;top:1078px;width:40px;height:2px;background:#86c5f5;"></div><div style="left:1381px;top:1078px;width:48px;height:2px;background:#86c5f5;"></div><div style="left:1483px;top:1078px;width:40px;height:2px;background:#86c5f5;"></div><div style="left:1532px;top:1078px;width:40px;height:2px;background:#86c5f5;"></div><div style="left:1630px;top:1078px;width:40px;height:2px;background:#86c5f5;"></div><div style="left:1345px;top:1049px;width:22px;height:22px;background:#0b0a24;border-radius:4px;"></div><svg style="left:1348px;top:1052px;" width="16" height="16" viewBox="0 0 16 16"><path d="M2 14 C4 11.6 6.6 7.6 7.4 3.2 C7.6 1.6 9 1.6 9 3.2 C9 6 10.6 9.2 13.6 10 C15 10.4 14.8 11.8 13.4 11.4 C10 10.4 5.6 11.4 2.8 14.4 C2 15 1.4 14.6 2 14 Z" fill="none" stroke="#fff" stroke-width="1.5" stroke-linejoin="round"/></svg><div style="left:1394px;top:1049px;width:22px;height:22px;background:#330000;border-radius:4px;"></div><span class="t" style="left:1398.2px;top:1053px;font-size:13px;line-height:13px;color:#ff9a00;font-weight:700;transform:scaleX(1.0385);">Ai</span><div style="left:1443px;top:1049px;width:22px;height:22px;background:#49021f;border-radius:4px;"></div><span class="t" style="left:1448.5px;top:1053px;font-size:13px;line-height:13px;color:#ff3366;font-weight:700;transform:scaleX(0.9514);">Id</span><div style="left:1492px;top:1049px;width:22px;height:22px;background:#0a1d30;border-radius:4px;"></div><span class="t" style="left:1496.4px;top:1054px;font-size:13px;line-height:13px;color:#31a8ff;font-weight:700;transform:scaleX(0.8550);">Ps</span><svg style="left:1541px;top:1048.5px;" width="22.5" height="22.5" viewBox="0 0 22.5 22.5"><circle cx="11.25" cy="11.25" r="11.2" fill="#de5246"/><path d="M11.25 11.25 L1.55 16.85 A11.2 11.2 0 0 0 11.25 22.45 L16.1 14.05 Z" fill="#3aa757"/><path d="M11.25 11.25 L1.55 5.65 A11.2 11.2 0 0 0 1.55 16.85 L6.4 14.05 Z" fill="#3aa757"/><path d="M11.25 11.25 L20.95 5.65 A11.2 11.2 0 0 1 11.25 22.45 L16.1 14.05 Z" fill="#e3b56a"/><path d="M1.55 5.65 A11.2 11.2 0 0 1 20.95 5.65 L11.25 5.65 L6.4 8.45 Z" fill="#de5246"/><circle cx="11.25" cy="11.25" r="5.3" fill="#f1f1f1"/><circle cx="11.25" cy="11.25" r="4.1" fill="#4f86ec"/></svg><svg style="left:1588px;top:1048px;" width="25" height="24" viewBox="0 0 25 24"><path d="M12.5 0.6 C19.4 0.6 24.4 5.6 24.4 11.4 C24.4 15.4 21.4 17 18.8 17 C16 17 14.6 15.6 15.4 14 C16.4 12.2 15.4 8.6 11.6 8.6 C6 8.6 3.6 15 7.6 19.8 C9.4 22 13 23.6 17.4 22.4 C14.2 24.4 7.4 24.4 3.4 19.6 C-0.6 14.6 0.6 7.4 4.4 3.8 C6.6 1.8 9.4 0.6 12.5 0.6 Z" fill="#3586cf"/><path d="M12.5 0.6 C19.4 0.6 24.4 5.6 24.4 11.4 C24.4 15.4 21.4 17 18.8 17 C16 17 14.6 15.6 15.4 14 C16.6 11.6 14.6 6 9 6.6 C12 3 18 2.4 12.5 0.6 Z" fill="#35b86b"/><path d="M7.6 19.8 C3.6 15 6 8.6 11.6 8.6 C8.6 10.6 8.6 16 12.6 18.6 C14.6 19.8 17 19.8 19.6 18.2 C18.4 20.6 14 22.6 7.6 19.8 Z" fill="#1a5a9e"/></svg><svg style="left:1638px;top:1050px;" width="24" height="20" viewBox="0 0 24 20"><path d="M1 1.6 L8.6 1.6 L10.4 3.6 L22.6 3.6 L22.6 18.6 L1 18.6 Z" fill="#e9b872"/><rect x="1" y="4.6" width="21.6" height="14" fill="#f3cb8b"/><rect x="5" y="11" width="14" height="7.8" fill="#3f8fdc"/><rect x="8" y="15" width="8" height="3.8" fill="#f3cb8b"/><rect x="5" y="11" width="14" height="1.6" fill="#2f78c4"/></svg><svg style="left:1686px;top:1047px;" width="26" height="26" viewBox="0 0 26 26"><path d="M8 1 L12.6 6 M17.6 1 L13 6" stroke="#111" stroke-width="1.4"/><rect x="1" y="6" width="23.6" height="18.6" rx="3" fill="#0a0a0a"/><rect x="3.6" y="8.6" width="15.6" height="13.4" rx="1.6" fill="#d41f1f"/><rect x="3.6" y="8.6" width="15.6" height="5" rx="1.6" fill="#b56a4a"/><path d="M9.6 10.6 L13.6 10.6 L13.6 15 L16.6 15 L11.6 20.6 L6.6 15 L9.6 15 Z" fill="#fff"/><rect x="21" y="10.6" width="2" height="2" fill="#aaa"/><rect x="21" y="14.6" width="2" height="2" fill="#aaa"/></svg><svg style="left:1736px;top:1048px;" width="25" height="24" viewBox="0 0 25 24"><ellipse cx="10" cy="14" rx="9.6" ry="5.2" fill="#8e8e8e"/><ellipse cx="12" cy="9.6" rx="11" ry="7" transform="rotate(-18 12 9.6)" fill="#f4f2ee" stroke="#c8553a" stroke-width="1"/><path d="M11 3 L12.6 14 M4 10 L13 14 M17 6 L12 13" stroke="#b9b9b9" stroke-width="0.9"/><path d="M15.4 14 C19 11.6 23 14 22.4 16 C21.8 17.6 19 17 18.4 15.6 M16.4 15.4 C13 17.6 13.6 22.4 16.4 22.4 C19 22.4 18.6 18.6 17.2 17" fill="none" stroke="#2f7fd6" stroke-width="1.6"/></svg><div style="left:1785px;top:1048px;width:24px;height:24px;background:#2d7fd8;border-radius:2px;"></div><svg style="left:1785px;top:1048px;" width="24" height="24" viewBox="0 0 24 24"><circle cx="12" cy="12" r="9.6" fill="#fff"/><path d="M3.6 12 L8.6 8.6 L8.6 10.8 L15.4 10.8 L15.4 8.6 L20.4 12 L15.4 15.4 L15.4 13.2 L8.6 13.2 L8.6 15.4 Z" fill="#2d7fd8"/></svg><svg style="left:1838px;top:1050px" width="20" height="19" viewBox="1838 1050 20 19"><rect x="1845.6" y="1056.6" width="10" height="5.8" fill="none" stroke="#f2f2f2" stroke-width="1.2"/><path d="M1845.6 1052 L1845.6 1054.3 L1855.6 1054.3 L1855.6 1052 M1845.6 1067.2 L1845.6 1064.8 L1855.6 1064.8 L1855.6 1067.2" fill="none" stroke="#f2f2f2" stroke-width="1.2"/><rect x="1841" y="1052" width="1.2" height="2.8" fill="#f2f2f2"/><rect x="1840" y="1056" width="3.1" height="3" fill="#f2f2f2"/><rect x="1841" y="1060.2" width="1.2" height="7" fill="#f2f2f2"/></svg><svg style="left:1887.8px;top:1051.8px;" width="16.4" height="16.4" viewBox="0 0 16.4 16.4"><path d="M0 2.2 L6.3 1.3 L6.3 7.4 L0 7.4 Z M7.1 1.2 L16.4 0 L16.4 7.4 L7.1 7.4 Z M0 8.3 L6.3 8.3 L6.3 15 L0 14.1 Z M7.1 8.3 L16.4 8.3 L16.4 16.4 L7.1 15.1 Z" fill="#fff"/></svg><div style="left:0px;top:0px;width:1920px;height:30px;background:#535353;"></div><div style="left:0px;top:30px;width:1920px;height:1px;background:#3b3b3b;"></div><div style="left:10px;top:7px;width:16px;height:15px;background:#330000;border-radius:3px;"></div><span class="t" style="left:12.5px;top:11px;font-size:10px;line-height:10px;color:#ff9a00;font-weight:700;transform:scaleX(1.1000);">Ai</span><svg style="left:40px;top:7px;" width="19" height="17" viewBox="0 0 19 17"><path d="M9.5 0.5 L0.5 8.8 L3 8.8 L3 16 L7.6 16 L7.6 11 L11.4 11 L11.4 16 L16 16 L16 8.8 L18.5 8.8 Z" fill="#c6c6c6"/></svg><div style="left:72.5px;top:5px;width:1px;height:20px;background:#636363;"></div><span class="t" style="left:89px;top:7px;font-size:13px;line-height:13px;color:#e2e2e2;transform:scaleX(0.8829);">File</span><span class="t" style="left:122px;top:7px;font-size:13px;line-height:13px;color:#e2e2e2;transform:scaleX(0.9149);">Edit</span><span class="t" style="left:157px;top:7px;font-size:13px;line-height:13px;color:#e2e2e2;transform:scaleX(0.9447);">Object</span><span class="t" style="left:207px;top:7px;font-size:13px;line-height:13px;color:#e2e2e2;transform:scaleX(0.9047);">Type</span><span class="t" style="left:247px;top:7px;font-size:13px;line-height:13px;color:#e2e2e2;transform:scaleX(0.8716);">Select</span><span class="t" style="left:293px;top:7px;font-size:13px;line-height:13px;color:#e2e2e2;transform:scaleX(0.9238);">Effect</span><span class="t" style="left:337.5px;top:7px;font-size:13px;line-height:13px;color:#e2e2e2;transform:scaleX(0.9122);">View</span><span class="t" style="left:377px;top:7px;font-size:13px;line-height:13px;color:#e2e2e2;transform:scaleX(0.9514);">Window</span><span class="t" style="left:435px;top:7px;font-size:13px;line-height:13px;color:#e2e2e2;transform:scaleX(0.9533);">Help</span><div style="left:471.5px;top:5px;width:1px;height:20px;background:#636363;"></div><svg style="left:484px;top:8px;" width="18" height="11" viewBox="0 0 18 11"><rect x="0" y="0" width="8" height="11" fill="#cfcfcf"/><rect x="9.5" y="0" width="8" height="4.7" fill="#cfcfcf"/><rect x="9.5" y="6.3" width="8" height="4.7" fill="#cfcfcf"/></svg><svg style="left:0;top:0;overflow:visible" width="1" height="1"><path d="M509.75 11.5 L513.5 15.5 L517.25 11.5" fill="none" stroke="#f0f0f0" stroke-width="1.4"/></svg><div style="left:1614.5px;top:5px;width:1px;height:20px;background:#636363;"></div><svg style="left:1629px;top:9px;" width="17" height="13" viewBox="0 0 17 13"><rect x="0.75" y="0.75" width="15" height="11.5" fill="none" stroke="#cfcfcf" stroke-width="1.5"/><rect x="3" y="4" width="2" height="1.6" fill="#cfcfcf"/><rect x="3" y="7.2" width="2" height="1.6" fill="#cfcfcf"/></svg><div style="left:1655px;top:4px;width:170px;height:21px;background:#464646;border:1px solid #5f5f5f;border-radius:3px;"></div><svg style="left:1659px;top:8px;" width="12" height="13" viewBox="0 0 12 13"><circle cx="4.6" cy="4.6" r="3.5" fill="none" stroke="#d4d4d4" stroke-width="1.5"/><path d="M7.2 7.4 L10.8 11.4" stroke="#d4d4d4" stroke-width="1.9"/></svg><svg style="left:0;top:0;overflow:visible" width="1" height="1"><path d="M1670.25 12.9 L1673.5 16.1 L1676.75 12.9" fill="none" stroke="#d4d4d4" stroke-width="1.2"/></svg><span class="t" style="left:1680px;top:12px;font-size:10.2px;line-height:10.2px;color:#8e8e8e;text-rendering:geometricPrecision;-webkit-text-stroke:.3px;transform:scaleX(1.0422);">Search Adobe Help</span><div style="left:1833px;top:-2px;width:85px;height:21px;border:1px solid #616161;border-radius:3px;"></div><div style="left:1861px;top:0px;width:1px;height:18px;background:#616161;"></div><div style="left:1888px;top:0px;width:1px;height:18px;background:#616161;"></div><div style="left:1842px;top:11px;width:11px;height:3px;background:#c4c4c4;"></div><svg style="left:1868px;top:5px;" width="14" height="11" viewBox="0 0 14 11"><rect x="4.2" y="1" width="8.5" height="6" fill="none" stroke="#c4c4c4" stroke-width="1.7"/><rect x="1" y="4" width="8.5" height="6" fill="#535353" stroke="#c4c4c4" stroke-width="1.7"/></svg><svg style="left:1897px;top:4px;" width="12" height="11" viewBox="0 0 12 11"><path d="M1.2 1 L10.8 10 M10.8 1 L1.2 10" stroke="#c4c4c4" stroke-width="2.4"/></svg><div style="left:0px;top:31px;width:1920px;height:33px;background:#535353;"></div><div style="left:0px;top:64px;width:1920px;height:1px;background:#3b3b3b;"></div><div style="left:0px;top:31px;width:1px;height:33px;background:#484848;"></div><div style="left:5px;top:38px;width:3px;height:1px;background:#3e3e3e;"></div><div style="left:5px;top:41px;width:3px;height:1px;background:#3e3e3e;"></div><div style="left:5px;top:44px;width:3px;height:1px;background:#3e3e3e;"></div><div style="left:5px;top:47px;width:3px;height:1px;background:#3e3e3e;"></div><div style="left:5px;top:50px;width:3px;height:1px;background:#3e3e3e;"></div><div style="left:5px;top:53px;width:3px;height:1px;background:#3e3e3e;"></div><div style="left:5px;top:56px;width:3px;height:1px;background:#3e3e3e;"></div><span class="t" style="left:14.7px;top:44px;font-size:10.2px;line-height:10.2px;color:#b4b4b4;text-rendering:geometricPrecision;-webkit-text-stroke:.3px;transform:scaleX(0.9533);">Characters</span><div style="left:87px;top:35px;width:2px;height:25px;background:#494949;"></div><div style="left:94px;top:37px;width:39px;height:21px;background:#484848;border:1px solid #5c5c5c;border-radius:3px;"></div><div style="left:95px;top:38px;width:19px;height:19px;background:#000;border:1px solid #fff;"></div><svg style="left:0;top:0;overflow:visible" width="1" height="1"><path d="M120.0 45.75 L123.5 49.25 L127.0 45.75" fill="none" stroke="#f0f0f0" stroke-width="1.4"/></svg><div style="left:138px;top:37px;width:39px;height:21px;background:#484848;border:1px solid #5c5c5c;border-radius:3px;"></div><div style="left:139px;top:38px;width:19px;height:19px;background:#fff;"></div><svg style="left:139px;top:38px;" width="19" height="19" viewBox="0 0 19 19"><rect x="6.5" y="6.5" width="6" height="6" fill="none" stroke="#000" stroke-width="1"/><path d="M1.5 17.5 L17.5 1.5" stroke="#f0141e" stroke-width="2.2"/></svg><svg style="left:0;top:0;overflow:visible" width="1" height="1"><path d="M164.0 45.75 L167.5 49.25 L171.0 45.75" fill="none" stroke="#f0f0f0" stroke-width="1.4"/></svg><span class="t" style="left:188.5px;top:44px;font-size:10.2px;line-height:10.2px;color:#dedede;text-rendering:geometricPrecision;-webkit-text-stroke:.3px;transform:scaleX(0.9758);">Stroke:</span><div style="left:188.5px;top:53px;width:31.5px;height:0;border-top:1px dotted #c4c4c4;"></div><div style="left:226px;top:37px;width:82px;height:21px;border:1px solid #626262;border-radius:3px;overflow:hidden;"><div style="left:0px;top:0;width:18px;height:19px;background:#4a4a4a;border-right:1px solid #626262;"></div><div style="left:18px;top:0;width:45px;height:19px;background:#424242;border-right:1px solid #626262;"></div><div style="left:63px;top:0;width:17px;height:19px;background:#4a4a4a;"></div></div><svg style="left:0;top:0;overflow:visible" width="1" height="1"><path d="M232.0 44.75 L235.5 41.25 L239.0 44.75" fill="none" stroke="#f0f0f0" stroke-width="1.4"/></svg><svg style="left:0;top:0;overflow:visible" width="1" height="1"><path d="M232.0 50.25 L235.5 53.75 L239.0 50.25" fill="none" stroke="#f0f0f0" stroke-width="1.4"/></svg><svg style="left:0;top:0;overflow:visible" width="1" height="1"><path d="M294.5 45.75 L298 49.25 L301.5 45.75" fill="none" stroke="#f0f0f0" stroke-width="1.4"/></svg><div style="left:313px;top:37px;width:90px;height:21px;background:#8b8b8b;"></div><div style="left:403px;top:37px;width:17px;height:21px;background:#575757;border:1px solid #5c5c5c;border-left:none;border-radius:0 3px 3px 0;"></div><svg style="left:0;top:0;overflow:visible" width="1" height="1"><path d="M408.5 46.0 L411.5 49.0 L414.5 46.0" fill="none" stroke="#6e6e6e" stroke-width="1.2"/></svg><span class="t" style="left:428.7px;top:44px;font-size:10.2px;line-height:10.2px;color:#dedede;text-rendering:geometricPrecision;-webkit-text-stroke:.3px;transform:scaleX(0.9900);">Opacity:</span><div style="left:428.7px;top:53px;width:37px;height:0;border-top:1px dotted #c4c4c4;"></div><div style="left:471px;top:37px;width:70px;height:21px;border:1px solid #626262;border-radius:3px;overflow:hidden;"><div style="left:0px;top:0;width:50px;height:19px;background:#424242;border-right:1px solid #626262;"></div><div style="left:50px;top:0;width:18px;height:19px;background:#4a4a4a;"></div></div><span class="t" style="left:475px;top:44px;font-size:10.2px;line-height:10.2px;color:#dedede;text-rendering:geometricPrecision;-webkit-text-stroke:.3px;transform:scaleX(0.9592);">100%</span><svg style="left:0;top:0;overflow:visible" width="1" height="1"><path d="M528.5 43.5 L532.5 47.5 L528.5 51.5" fill="none" stroke="#f0f0f0" stroke-width="1.4"/></svg><div style="left:546px;top:35px;width:2px;height:25px;background:#494949;"></div><svg style="left:557px;top:39px;" width="18" height="17" viewBox="0 0 18 17"><circle cx="9" cy="8.1" r="7.6" fill="#b2b2b2" stroke="#d2d2d2" stroke-width="1.1"/><path d="M7.16 8.59 L2.53 9.83 A6.7 6.7 0 0 1 2.59 6.14 L7.18 7.54 Z" fill="#5e5e5e"/><path d="M8.11 9.78 L5.85 14.02 A6.7 6.7 0 0 1 3.08 11.25 L7.32 8.99 Z" fill="#1c1c1c"/><path d="M9.40 9.96 L10.39 14.65 A6.7 6.7 0 0 1 7.15 14.54 L8.48 9.93 Z" fill="#5e5e5e"/><path d="M10.79 8.75 L15.30 10.39 A6.7 6.7 0 0 1 12.15 14.02 L9.89 9.78 Z" fill="#8c8c8c"/><path d="M9.59 6.29 L11.07 1.73 A6.7 6.7 0 0 1 15.47 6.37 L10.84 7.61 Z" fill="#dcdcdc"/><path d="M7.39 7.09 L3.32 4.55 A6.7 6.7 0 0 1 8.07 1.47 L8.74 6.22 Z" fill="#9c9c9c"/><circle cx="9" cy="8.1" r="1.5" fill="#e0e0e0"/></svg><div style="left:584px;top:35px;width:2px;height:25px;background:#494949;"></div><span class="t" style="left:592.7px;top:44px;font-size:10.2px;line-height:10.2px;color:#dedede;text-rendering:geometricPrecision;-webkit-text-stroke:.3px;transform:scaleX(0.9671);">Character:</span><div style="left:592.7px;top:53px;width:46px;height:0;border-top:1px dotted #c4c4c4;"></div><div style="left:644px;top:37px;width:162px;height:21px;border:1px solid #626262;border-radius:3px;overflow:hidden;"><div style="left:0px;top:0;width:142px;height:19px;background:#424242;border-right:1px solid #626262;"></div><div style="left:142px;top:0;width:18px;height:19px;background:#4a4a4a;"></div></div><svg style="left:646px;top:41px;" width="12" height="13" viewBox="0 0 12 13"><circle cx="4.4" cy="4.8" r="3.4" fill="none" stroke="#c9c9c9" stroke-width="1.3"/><path d="M6.9 7.5 L10.2 11.2" stroke="#c9c9c9" stroke-width="1.6"/></svg><svg style="left:0;top:0;overflow:visible" width="1" height="1"><path d="M657.5 45.5 L660.5 48.5 L663.5 45.5" fill="none" stroke="#c9c9c9" stroke-width="1.1"/></svg><span class="t" style="left:670.7px;top:45px;font-size:10.2px;line-height:10.2px;color:#dedede;text-rendering:geometricPrecision;-webkit-text-stroke:.3px;transform:scaleX(0.9779);">Myriad Hebrew</span><svg style="left:0;top:0;overflow:visible" width="1" height="1"><path d="M793.0 45.75 L796.5 49.25 L800.0 45.75" fill="none" stroke="#f0f0f0" stroke-width="1.4"/></svg><div style="left:811px;top:37px;width:102px;height:21px;border:1px solid #626262;border-radius:3px;overflow:hidden;"><div style="left:0px;top:0;width:82px;height:19px;background:#424242;border-right:1px solid #626262;"></div><div style="left:82px;top:0;width:18px;height:19px;background:#4a4a4a;"></div></div><span class="t" style="left:817.7px;top:45px;font-size:10.2px;line-height:10.2px;color:#dedede;text-rendering:geometricPrecision;-webkit-text-stroke:.3px;transform:scaleX(0.9667);">Regular</span><svg style="left:0;top:0;overflow:visible" width="1" height="1"><path d="M900.0 45.75 L903.5 49.25 L907.0 45.75" fill="none" stroke="#f0f0f0" stroke-width="1.4"/></svg><div style="left:918px;top:37px;width:82px;height:21px;border:1px solid #626262;border-radius:3px;overflow:hidden;"><div style="left:0px;top:0;width:18px;height:19px;background:#4a4a4a;border-right:1px solid #626262;"></div><div style="left:18px;top:0;width:44px;height:19px;background:#424242;border-right:1px solid #626262;"></div><div style="left:62px;top:0;width:18px;height:19px;background:#4a4a4a;"></div></div><svg style="left:0;top:0;overflow:visible" width="1" height="1"><path d="M924.0 44.75 L927.5 41.25 L931.0 44.75" fill="none" stroke="#f0f0f0" stroke-width="1.4"/></svg><svg style="left:0;top:0;overflow:visible" width="1" height="1"><path d="M924.0 50.25 L927.5 53.75 L931.0 50.25" fill="none" stroke="#f0f0f0" stroke-width="1.4"/></svg><span class="t" style="left:940px;top:43px;font-size:10.2px;line-height:10.2px;color:#dedede;text-rendering:geometricPrecision;-webkit-text-stroke:.3px;transform:scaleX(0.9708);">127 pt</span><svg style="left:0;top:0;overflow:visible" width="1" height="1"><path d="M986.0 45.75 L989.5 49.25 L993.0 45.75" fill="none" stroke="#f0f0f0" stroke-width="1.4"/></svg><span class="t" style="left:1006.7px;top:44px;font-size:10.2px;line-height:10.2px;color:#dedede;text-rendering:geometricPrecision;-webkit-text-stroke:.3px;transform:scaleX(0.9622);">Paragraph:</span><div style="left:1006.7px;top:53px;width:48.5px;height:0;border-top:1px dotted #c4c4c4;"></div><div style="left:1061px;top:36px;width:74px;height:22px;border:1px solid #5f5f5f;border-radius:3px;"></div><div style="left:1085px;top:37px;width:1px;height:20px;background:#5f5f5f;"></div><div style="left:1111px;top:36px;width:24px;height:22px;background:#2c2b2e;border-radius:0 3px 3px 0;"></div><div style="left:1066px;top:40px;width:12px;height:1.2px;background:#c9c9c9;"></div><div style="left:1066px;top:43px;width:15px;height:1.2px;background:#c9c9c9;"></div><div style="left:1066px;top:46px;width:12px;height:1.2px;background:#c9c9c9;"></div><div style="left:1066px;top:49px;width:15px;height:1.2px;background:#c9c9c9;"></div><div style="left:1066px;top:52px;width:12px;height:1.2px;background:#c9c9c9;"></div><div style="left:1092px;top:40px;width:12px;height:1.2px;background:#c9c9c9;"></div><div style="left:1090px;top:43px;width:16px;height:1.2px;background:#c9c9c9;"></div><div style="left:1092px;top:46px;width:12px;height:1.2px;background:#c9c9c9;"></div><div style="left:1090px;top:49px;width:16px;height:1.2px;background:#c9c9c9;"></div><div style="left:1092px;top:52px;width:12px;height:1.2px;background:#c9c9c9;"></div><div style="left:1118px;top:40px;width:12px;height:1.2px;background:#ffffff;"></div><div style="left:1115px;top:43px;width:15px;height:1.2px;background:#ffffff;"></div><div style="left:1118px;top:46px;width:12px;height:1.2px;background:#ffffff;"></div><div style="left:1115px;top:49px;width:15px;height:1.2px;background:#ffffff;"></div><div style="left:1118px;top:52px;width:12px;height:1.2px;background:#ffffff;"></div><div style="left:1140px;top:36px;width:49px;height:22px;border:1px solid #5f5f5f;border-radius:3px;"></div><div style="left:1165px;top:36px;width:24px;height:22px;background:#2c2b2e;border-radius:0 3px 3px 0;"></div><svg style="left:1144px;top:41px;" width="18" height="12" viewBox="0 0 18 12"><path d="M0.8 1.8 L6 6 L0.8 10.2 Z" fill="#b4b4b4"/><path d="M11 1 L15.2 1 L15.2 11 L14 11 L14 2.2 L12.4 2.2 L12.4 11 L11.2 11 L11.2 6.6 L10.4 6.6 C6.6 6.6 6.6 1 10.4 1 Z" fill="#b4b4b4"/></svg><svg style="left:1168px;top:41px;" width="18" height="12" viewBox="0 0 18 12"><path d="M16.2 1.8 L11 6 L16.2 10.2 Z" fill="#fff"/><path d="M5.6 1 L10 1 L10 11 L8.8 11 L8.8 2.2 L7.2 2.2 L7.2 11 L6 11 L6 6.6 L5.2 6.6 C1.2 6.6 1.2 1 5.2 1 Z" fill="#fff"/></svg><span class="t" style="left:1195.7px;top:44px;font-size:10.2px;line-height:10.2px;color:#dedede;text-rendering:geometricPrecision;-webkit-text-stroke:.3px;transform:scaleX(0.9675);">Area Type:</span><div style="left:1195.7px;top:53px;width:47.5px;height:0;border-top:1px dotted #c4c4c4;"></div><div style="left:1256px;top:40.0px;width:14px;height:1.2px;background:#b9b9b9;"></div><div style="left:1256px;top:43.3px;width:14px;height:1.2px;background:#b9b9b9;"></div><div style="left:1256px;top:46.6px;width:10px;height:1.2px;background:#b9b9b9;"></div><svg style="left:0;top:0;overflow:visible" width="1" height="1"><path d="M1272.5 46.0 L1275.5 49.0 L1278.5 46.0" fill="none" stroke="#c9c9c9" stroke-width="1.1"/></svg><div style="left:1291px;top:35px;width:2px;height:25px;background:#494949;"></div><svg style="left:1303px;top:38.2px;" width="18" height="17" viewBox="0 0 18 17"><path d="M1 2.5 L4 2.5 M2.5 1 L2.5 4" stroke="#bdbdbd" stroke-width="1"/><path d="M4.7 4.4 L12 4.4 L15.3 7.7 L15.3 15.4 L4.7 15.4 Z" fill="#7e7a7a" stroke="#c4c4c4" stroke-width="1.2"/></svg><svg style="left:0;top:0;overflow:visible" width="1" height="1"><path d="M1321.3 46.0 L1324.5 49.2 L1327.7 46.0" fill="none" stroke="#c9c9c9" stroke-width="1.2"/></svg><svg style="left:1344px;top:38px;" width="17" height="19" viewBox="0 0 17 19"><rect x="0.8" y="0" width="1.2" height="18" fill="#c6c6c6"/><rect x="3.2" y="2.1" width="8.1" height="5.3" fill="#c6c6c6"/><rect x="3.2" y="10.2" width="12.8" height="5.2" fill="#c6c6c6"/></svg><svg style="left:1371px;top:38px;" width="15" height="19" viewBox="0 0 15 19"><rect x="6.8" y="0" width="1.2" height="18" fill="#c6c6c6"/><rect x="3.2" y="2.1" width="8.6" height="5.3" fill="#c6c6c6"/><rect x="1" y="10.2" width="13" height="5.2" fill="#c6c6c6"/></svg><svg style="left:1397px;top:38px;" width="17" height="19" viewBox="0 0 17 19"><rect x="14.8" y="0" width="1.2" height="18" fill="#c6c6c6"/><rect x="6.2" y="2.1" width="7.8" height="5.3" fill="#c6c6c6"/><rect x="1.1" y="10.2" width="12.9" height="5.2" fill="#c6c6c6"/></svg><svg style="left:1426px;top:39px;" width="20" height="17" viewBox="0 0 20 17"><rect x="0.9" y="0.3" width="18.2" height="1.2" fill="#c6c6c6"/><rect x="3.9" y="2.6" width="5.2" height="12.2" fill="#c6c6c6"/><rect x="11.3" y="2.6" width="5.7" height="7.2" fill="#c6c6c6"/></svg><svg style="left:1452px;top:40px;" width="20" height="15" viewBox="0 0 20 15"><rect x="0.9" y="6.1" width="18" height="1.2" fill="#c6c6c6"/><rect x="3.9" y="0.1" width="5.1" height="13" fill="#c6c6c6"/><rect x="11" y="2.2" width="6" height="8.8" fill="#c6c6c6"/></svg><svg style="left:1479px;top:39px;" width="19" height="17" viewBox="0 0 19 17"><rect x="0" y="15.3" width="18" height="1.2" fill="#c6c6c6"/><rect x="3" y="1.1" width="5" height="12.5" fill="#c6c6c6"/><rect x="10" y="5.9" width="6" height="7.7" fill="#c6c6c6"/></svg><div style="left:1506px;top:35px;width:2px;height:25px;background:#494949;"></div><span class="t" style="left:1515px;top:44px;font-size:10.2px;line-height:10.2px;color:#f0f0f0;text-rendering:geometricPrecision;-webkit-text-stroke:.3px;transform:scaleX(0.9555);">Transform</span><div style="left:1515px;top:53px;width:44px;height:0;border-top:1px dotted #c4c4c4;"></div><svg style="left:1814px;top:38px" width="92" height="18" viewBox="1814 38 92 18"><path d="M1822.5 39 L1822.5 54 M1815 46.5 L1830 46.5" stroke="#626262" stroke-width="1"/><rect x="1817" y="41" width="4" height="4" fill="#7c7777"/><rect x="1824" y="41" width="4" height="4" fill="#7c7777"/><rect x="1817" y="48" width="4" height="4" fill="#7c7777"/><rect x="1824" y="48" width="4" height="4" fill="#7c7777"/><rect x="1841.8" y="40" width="4.3" height="3.9" fill="#c6c6c6"/><rect x="1841.8" y="45.1" width="4.3" height="3.8" fill="#c6c6c6"/><rect x="1841.8" y="50.1" width="4.3" height="3.9" fill="#c6c6c6"/><path d="M1850.6 44.5 L1852.4 44.5 A2.45 2.45 0 0 1 1852.4 49.4 L1850.6 49.4" fill="none" stroke="#c6c6c6" stroke-width="2.4"/><rect x="1847.9" y="43.3" width="2" height="2.4" fill="#c6c6c6"/><rect x="1847.9" y="48.2" width="2" height="2.4" fill="#c6c6c6"/><path d="M1863.8 45 L1867.4 48.4 L1871 45" fill="none" stroke="#7c7777" stroke-width="1.2"/><rect x="1891" y="43.1" width="2.1" height="2.2" fill="#c6c6c6"/><rect x="1894.2" y="43.6" width="7.9" height="1.2" fill="#c6c6c6"/><rect x="1891" y="46.2" width="2.1" height="2.2" fill="#c6c6c6"/><rect x="1894.2" y="46.7" width="7.9" height="1.2" fill="#c6c6c6"/><rect x="1891" y="49.3" width="2.1" height="2.2" fill="#c6c6c6"/><rect x="1894.2" y="49.8" width="7.9" height="1.2" fill="#c6c6c6"/></svg>
</body></html>
